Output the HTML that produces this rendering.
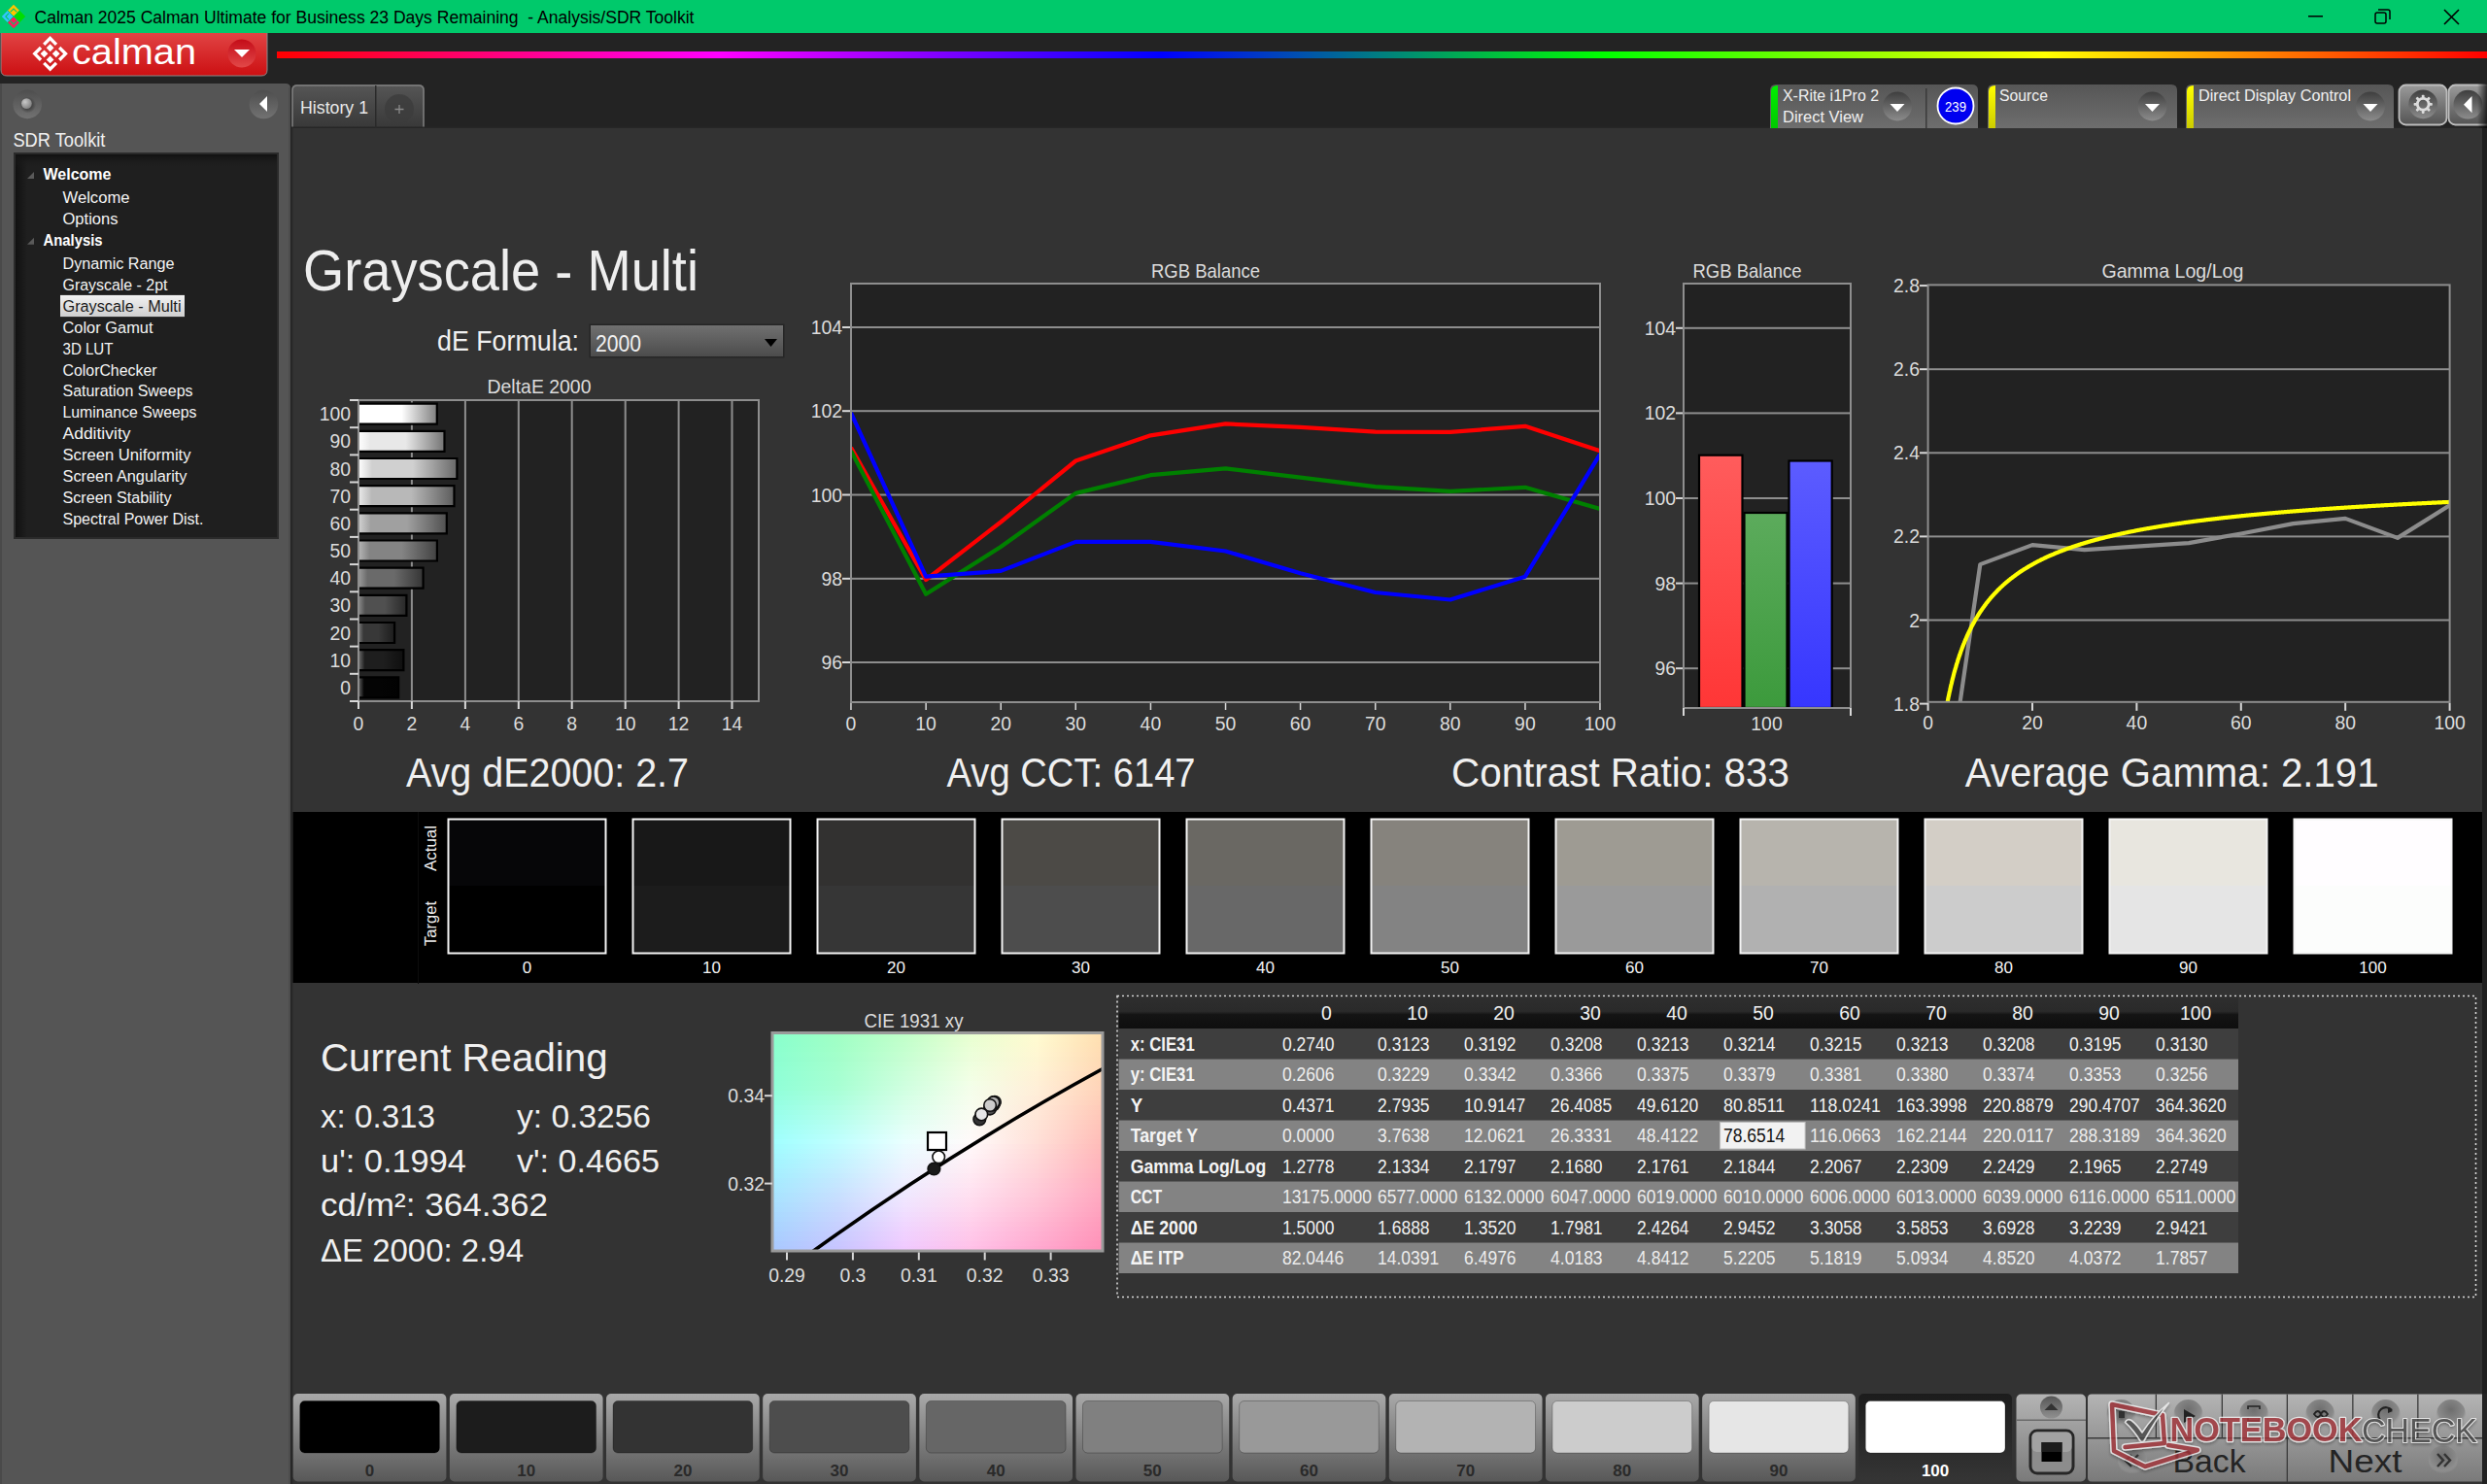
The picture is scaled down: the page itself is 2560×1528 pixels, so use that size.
<!DOCTYPE html>
<html><head><meta charset="utf-8"><title>Calman - Grayscale Multi</title>
<style>html,body{margin:0;padding:0;width:2560px;height:1528px;overflow:hidden;background:#232323;font-family:"Liberation Sans", sans-serif;}</style>
</head><body>
<svg width="2560" height="1528" viewBox="0 0 2560 1528" style="position:absolute;left:0;top:0;font-family:&quot;Liberation Sans&quot;, sans-serif"><defs>
<linearGradient id="rainbow" x1="0" x2="1" y1="0" y2="0">
 <stop offset="0" stop-color="#ff0000"/><stop offset="0.2" stop-color="#ff00ff"/>
 <stop offset="0.4" stop-color="#0000ff"/><stop offset="0.6" stop-color="#00ff00"/>
 <stop offset="0.8" stop-color="#ffff00"/><stop offset="1" stop-color="#ff0000"/>
</linearGradient>
<linearGradient id="calred" x1="0" x2="0" y1="0" y2="1">
 <stop offset="0" stop-color="#e14444"/><stop offset="1" stop-color="#cc0f12"/>
</linearGradient>
<linearGradient id="ddcirc" x1="0" x2="0" y1="0" y2="1">
 <stop offset="0" stop-color="#3e3e3e"/><stop offset="1" stop-color="#8c8c8c"/>
</linearGradient>
<linearGradient id="redcirc" x1="0" x2="0" y1="0" y2="1">
 <stop offset="0" stop-color="#c40c18"/><stop offset="1" stop-color="#e24848"/>
</linearGradient>
<linearGradient id="widget" x1="0" x2="0" y1="0" y2="1">
 <stop offset="0" stop-color="#565656"/><stop offset="1" stop-color="#6e6e6e"/>
</linearGradient>
<linearGradient id="tabg" x1="0" x2="0" y1="0" y2="1">
 <stop offset="0" stop-color="#565656"/><stop offset="1" stop-color="#383838"/>
</linearGradient>
<linearGradient id="btngear" x1="0" x2="0" y1="0" y2="1">
 <stop offset="0" stop-color="#9a9a9a"/><stop offset="1" stop-color="#545454"/>
</linearGradient>
<linearGradient id="patchbtn" x1="0" x2="0" y1="0" y2="1">
 <stop offset="0" stop-color="#a9a9a9"/><stop offset="1" stop-color="#585858"/>
</linearGradient>
<linearGradient id="navbtn" x1="0" x2="0" y1="0" y2="1">
 <stop offset="0" stop-color="#b4b4b4"/><stop offset="1" stop-color="#7a7a7a"/>
</linearGradient>
<linearGradient id="hdr" x1="0" x2="0" y1="0" y2="1">
 <stop offset="0" stop-color="#2e2e2e"/><stop offset="0.45" stop-color="#2a2a2a"/><stop offset="0.55" stop-color="#141414"/><stop offset="1" stop-color="#0e0e0e"/>
</linearGradient>
<linearGradient id="treeshade" x1="0" x2="1" y1="0" y2="0">
 <stop offset="0" stop-color="#111"/><stop offset="1" stop-color="#1f1f1f"/>
</linearGradient>
<linearGradient id="ddsel" x1="0" x2="0" y1="0" y2="1">
 <stop offset="0" stop-color="#4a4a4a"/><stop offset="1" stop-color="#6a6a6a"/>
</linearGradient>
<linearGradient id="sbc" x1="0" x2="0" y1="0" y2="1"><stop offset="0" stop-color="#4e4e4e"/><stop offset="1" stop-color="#727272"/></linearGradient><radialGradient id="sph" cx="0.35" cy="0.35" r="0.75"><stop offset="0" stop-color="#c8c8c8"/><stop offset="1" stop-color="#7a7a7a"/></radialGradient><radialGradient id="sphsh" cx="0.5" cy="0.5" r="0.5"><stop offset="0.55" stop-color="#3a3a3a" stop-opacity="0.7"/><stop offset="1" stop-color="#3a3a3a" stop-opacity="0"/></radialGradient><linearGradient id="treetop" x1="0" x2="0" y1="0" y2="1"><stop offset="0" stop-color="#111" stop-opacity="1"/><stop offset="1" stop-color="#1f1f1f" stop-opacity="0"/></linearGradient><linearGradient id="selg" x1="0" x2="0" y1="0" y2="1"><stop offset="0" stop-color="#f2f2f2"/><stop offset="1" stop-color="#cfcfcf"/></linearGradient><linearGradient id="stg" x1="0" x2="0" y1="0" y2="1"><stop offset="0" stop-color="#00f000"/><stop offset="1" stop-color="#00c800"/></linearGradient><linearGradient id="sty" x1="0" x2="0" y1="0" y2="1"><stop offset="0" stop-color="#ffff00"/><stop offset="1" stop-color="#cccc00"/></linearGradient><linearGradient id="rshade" x1="0" x2="1" y1="0" y2="0"><stop offset="0" stop-color="#000" stop-opacity="0"/><stop offset="1" stop-color="#000" stop-opacity="0.7"/></linearGradient><linearGradient id="ddbox" x1="0" x2="0" y1="0" y2="1"><stop offset="0" stop-color="#707070"/><stop offset="1" stop-color="#4c4c4c"/></linearGradient><linearGradient id="bar0" x1="0" x2="1" y1="0" y2="0"><stop offset="0" stop-color="rgb(97,97,97)"/><stop offset="0.14" stop-color="rgb(4,4,4)"/><stop offset="0.55" stop-color="rgb(4,4,4)"/><stop offset="1" stop-color="rgb(2,2,2)"/></linearGradient><linearGradient id="bar1" x1="0" x2="1" y1="0" y2="0"><stop offset="0" stop-color="rgb(111,111,111)"/><stop offset="0.14" stop-color="rgb(30,30,30)"/><stop offset="0.55" stop-color="rgb(30,30,30)"/><stop offset="1" stop-color="rgb(15,15,15)"/></linearGradient><linearGradient id="bar2" x1="0" x2="1" y1="0" y2="0"><stop offset="0" stop-color="rgb(125,125,125)"/><stop offset="0.14" stop-color="rgb(56,56,56)"/><stop offset="0.55" stop-color="rgb(56,56,56)"/><stop offset="1" stop-color="rgb(28,28,28)"/></linearGradient><linearGradient id="bar3" x1="0" x2="1" y1="0" y2="0"><stop offset="0" stop-color="rgb(139,139,139)"/><stop offset="0.14" stop-color="rgb(80,80,80)"/><stop offset="0.55" stop-color="rgb(80,80,80)"/><stop offset="1" stop-color="rgb(40,40,40)"/></linearGradient><linearGradient id="bar4" x1="0" x2="1" y1="0" y2="0"><stop offset="0" stop-color="rgb(156,156,156)"/><stop offset="0.14" stop-color="rgb(106,106,106)"/><stop offset="0.55" stop-color="rgb(106,106,106)"/><stop offset="1" stop-color="rgb(53,53,53)"/></linearGradient><linearGradient id="bar5" x1="0" x2="1" y1="0" y2="0"><stop offset="0" stop-color="rgb(182,182,182)"/><stop offset="0.14" stop-color="rgb(132,132,132)"/><stop offset="0.55" stop-color="rgb(132,132,132)"/><stop offset="1" stop-color="rgb(66,66,66)"/></linearGradient><linearGradient id="bar6" x1="0" x2="1" y1="0" y2="0"><stop offset="0" stop-color="rgb(210,210,210)"/><stop offset="0.14" stop-color="rgb(160,160,160)"/><stop offset="0.55" stop-color="rgb(160,160,160)"/><stop offset="1" stop-color="rgb(80,80,80)"/></linearGradient><linearGradient id="bar7" x1="0" x2="1" y1="0" y2="0"><stop offset="0" stop-color="rgb(234,234,234)"/><stop offset="0.14" stop-color="rgb(184,184,184)"/><stop offset="0.55" stop-color="rgb(184,184,184)"/><stop offset="1" stop-color="rgb(92,92,92)"/></linearGradient><linearGradient id="bar8" x1="0" x2="1" y1="0" y2="0"><stop offset="0" stop-color="rgb(255,255,255)"/><stop offset="0.14" stop-color="rgb(208,208,208)"/><stop offset="0.55" stop-color="rgb(208,208,208)"/><stop offset="1" stop-color="rgb(104,104,104)"/></linearGradient><linearGradient id="bar9" x1="0" x2="1" y1="0" y2="0"><stop offset="0" stop-color="rgb(255,255,255)"/><stop offset="0.14" stop-color="rgb(232,232,232)"/><stop offset="0.55" stop-color="rgb(232,232,232)"/><stop offset="1" stop-color="rgb(116,116,116)"/></linearGradient><linearGradient id="bar10" x1="0" x2="1" y1="0" y2="0"><stop offset="0" stop-color="rgb(255,255,255)"/><stop offset="0.14" stop-color="rgb(255,255,255)"/><stop offset="0.55" stop-color="rgb(255,255,255)"/><stop offset="1" stop-color="rgb(127,127,127)"/></linearGradient><linearGradient id="gr" x1="0" x2="0" y1="0" y2="1"><stop offset="0" stop-color="#ff5c5c"/><stop offset="1" stop-color="#ff3636"/></linearGradient><linearGradient id="gg" x1="0" x2="0" y1="0" y2="1"><stop offset="0" stop-color="#5cab5c"/><stop offset="1" stop-color="#3c9a3c"/></linearGradient><linearGradient id="gb" x1="0" x2="0" y1="0" y2="1"><stop offset="0" stop-color="#5c5cff"/><stop offset="1" stop-color="#3636ff"/></linearGradient><linearGradient id="cieH" x1="0" x2="1" y1="0" y2="0"><stop offset="0" stop-color="#9fffe0"/><stop offset="0.5" stop-color="#f4fff4"/><stop offset="1" stop-color="#ffd8b0"/></linearGradient>
<linearGradient id="cieB" x1="0" x2="1" y1="0" y2="0"><stop offset="0" stop-color="#a8ccff"/><stop offset="0.5" stop-color="#ffd2f8"/><stop offset="1" stop-color="#ff8fb8"/></linearGradient>
<linearGradient id="cieV" x1="0" x2="0" y1="0" y2="1"><stop offset="0" stop-color="#000" stop-opacity="0"/><stop offset="1" stop-color="#000" stop-opacity="1"/></linearGradient>
<mask id="cieMask"><rect x="795" y="1063.5" width="340" height="224.5" fill="url(#cieV)"/></mask>
<radialGradient id="cieW" cx="0.48" cy="0.52" r="0.45"><stop offset="0" stop-color="#ffffff" stop-opacity="1"/><stop offset="1" stop-color="#ffffff" stop-opacity="0"/></radialGradient>
<radialGradient id="cieC" cx="0.0" cy="0.5" r="0.45"><stop offset="0" stop-color="#a8ffff" stop-opacity="1"/><stop offset="1" stop-color="#a8ffff" stop-opacity="0"/></radialGradient>
<radialGradient id="cieY" cx="0.72" cy="0.1" r="0.35"><stop offset="0" stop-color="#ffffd0" stop-opacity="1"/><stop offset="1" stop-color="#ffffd0" stop-opacity="0"/></radialGradient>
<linearGradient id="cr0" x1="0" x2="1" y1="0" y2="0"><stop offset="0.00" stop-color="rgb(136,255,204)"/><stop offset="0.20" stop-color="rgb(160,255,196)"/><stop offset="0.40" stop-color="rgb(192,255,201)"/><stop offset="0.60" stop-color="rgb(232,255,209)"/><stop offset="0.80" stop-color="rgb(255,251,208)"/><stop offset="1.00" stop-color="rgb(255,223,176)"/></linearGradient><linearGradient id="cr1" x1="0" x2="1" y1="0" y2="0"><stop offset="0.00" stop-color="rgb(137,255,205)"/><stop offset="0.20" stop-color="rgb(161,255,198)"/><stop offset="0.40" stop-color="rgb(194,255,203)"/><stop offset="0.60" stop-color="rgb(233,255,211)"/><stop offset="0.80" stop-color="rgb(255,250,209)"/><stop offset="1.00" stop-color="rgb(255,222,177)"/></linearGradient><linearGradient id="cr2" x1="0" x2="1" y1="0" y2="0"><stop offset="0.00" stop-color="rgb(137,255,206)"/><stop offset="0.20" stop-color="rgb(161,255,199)"/><stop offset="0.40" stop-color="rgb(195,255,205)"/><stop offset="0.60" stop-color="rgb(234,255,213)"/><stop offset="0.80" stop-color="rgb(255,249,209)"/><stop offset="1.00" stop-color="rgb(255,221,177)"/></linearGradient><linearGradient id="cr3" x1="0" x2="1" y1="0" y2="0"><stop offset="0.00" stop-color="rgb(138,255,207)"/><stop offset="0.20" stop-color="rgb(162,255,200)"/><stop offset="0.40" stop-color="rgb(196,255,207)"/><stop offset="0.60" stop-color="rgb(235,255,216)"/><stop offset="0.80" stop-color="rgb(255,248,210)"/><stop offset="1.00" stop-color="rgb(255,220,178)"/></linearGradient><linearGradient id="cr4" x1="0" x2="1" y1="0" y2="0"><stop offset="0.00" stop-color="rgb(139,255,208)"/><stop offset="0.20" stop-color="rgb(163,255,202)"/><stop offset="0.40" stop-color="rgb(198,255,209)"/><stop offset="0.60" stop-color="rgb(236,255,218)"/><stop offset="0.80" stop-color="rgb(255,247,211)"/><stop offset="1.00" stop-color="rgb(255,219,179)"/></linearGradient><linearGradient id="cr5" x1="0" x2="1" y1="0" y2="0"><stop offset="0.00" stop-color="rgb(139,254,209)"/><stop offset="0.20" stop-color="rgb(163,254,203)"/><stop offset="0.40" stop-color="rgb(199,254,211)"/><stop offset="0.60" stop-color="rgb(237,254,220)"/><stop offset="0.80" stop-color="rgb(254,246,211)"/><stop offset="1.00" stop-color="rgb(254,218,179)"/></linearGradient><linearGradient id="cr6" x1="0" x2="1" y1="0" y2="0"><stop offset="0.00" stop-color="rgb(140,255,210)"/><stop offset="0.20" stop-color="rgb(164,255,205)"/><stop offset="0.40" stop-color="rgb(201,255,213)"/><stop offset="0.60" stop-color="rgb(238,255,223)"/><stop offset="0.80" stop-color="rgb(255,245,212)"/><stop offset="1.00" stop-color="rgb(255,217,180)"/></linearGradient><linearGradient id="cr7" x1="0" x2="1" y1="0" y2="0"><stop offset="0.00" stop-color="rgb(141,255,212)"/><stop offset="0.20" stop-color="rgb(165,255,206)"/><stop offset="0.40" stop-color="rgb(202,255,216)"/><stop offset="0.60" stop-color="rgb(240,255,225)"/><stop offset="0.80" stop-color="rgb(255,244,213)"/><stop offset="1.00" stop-color="rgb(255,216,181)"/></linearGradient><linearGradient id="cr8" x1="0" x2="1" y1="0" y2="0"><stop offset="0.00" stop-color="rgb(142,255,213)"/><stop offset="0.20" stop-color="rgb(166,255,208)"/><stop offset="0.40" stop-color="rgb(204,255,218)"/><stop offset="0.60" stop-color="rgb(241,255,227)"/><stop offset="0.80" stop-color="rgb(255,242,214)"/><stop offset="1.00" stop-color="rgb(255,214,182)"/></linearGradient><linearGradient id="cr9" x1="0" x2="1" y1="0" y2="0"><stop offset="0.00" stop-color="rgb(142,255,214)"/><stop offset="0.20" stop-color="rgb(166,255,209)"/><stop offset="0.40" stop-color="rgb(205,255,220)"/><stop offset="0.60" stop-color="rgb(242,255,229)"/><stop offset="0.80" stop-color="rgb(255,241,214)"/><stop offset="1.00" stop-color="rgb(255,213,182)"/></linearGradient><linearGradient id="cr10" x1="0" x2="1" y1="0" y2="0"><stop offset="0.00" stop-color="rgb(143,255,215)"/><stop offset="0.20" stop-color="rgb(167,255,210)"/><stop offset="0.40" stop-color="rgb(206,255,222)"/><stop offset="0.60" stop-color="rgb(243,255,232)"/><stop offset="0.80" stop-color="rgb(255,240,215)"/><stop offset="1.00" stop-color="rgb(255,212,183)"/></linearGradient><linearGradient id="cr11" x1="0" x2="1" y1="0" y2="0"><stop offset="0.00" stop-color="rgb(144,255,216)"/><stop offset="0.20" stop-color="rgb(168,255,212)"/><stop offset="0.40" stop-color="rgb(208,255,224)"/><stop offset="0.60" stop-color="rgb(244,254,234)"/><stop offset="0.80" stop-color="rgb(255,239,216)"/><stop offset="1.00" stop-color="rgb(255,211,184)"/></linearGradient><linearGradient id="cr12" x1="0" x2="1" y1="0" y2="0"><stop offset="0.00" stop-color="rgb(145,255,220)"/><stop offset="0.20" stop-color="rgb(170,255,216)"/><stop offset="0.40" stop-color="rgb(210,255,227)"/><stop offset="0.60" stop-color="rgb(245,254,235)"/><stop offset="0.80" stop-color="rgb(255,238,216)"/><stop offset="1.00" stop-color="rgb(255,209,184)"/></linearGradient><linearGradient id="cr13" x1="0" x2="1" y1="0" y2="0"><stop offset="0.00" stop-color="rgb(147,255,223)"/><stop offset="0.20" stop-color="rgb(172,255,220)"/><stop offset="0.40" stop-color="rgb(213,255,230)"/><stop offset="0.60" stop-color="rgb(246,254,237)"/><stop offset="0.80" stop-color="rgb(255,236,216)"/><stop offset="1.00" stop-color="rgb(255,207,184)"/></linearGradient><linearGradient id="cr14" x1="0" x2="1" y1="0" y2="0"><stop offset="0.00" stop-color="rgb(148,255,227)"/><stop offset="0.20" stop-color="rgb(174,255,224)"/><stop offset="0.40" stop-color="rgb(215,255,232)"/><stop offset="0.60" stop-color="rgb(247,253,238)"/><stop offset="0.80" stop-color="rgb(255,235,216)"/><stop offset="1.00" stop-color="rgb(255,205,184)"/></linearGradient><linearGradient id="cr15" x1="0" x2="1" y1="0" y2="0"><stop offset="0.00" stop-color="rgb(150,255,230)"/><stop offset="0.20" stop-color="rgb(177,255,228)"/><stop offset="0.40" stop-color="rgb(217,255,235)"/><stop offset="0.60" stop-color="rgb(248,253,240)"/><stop offset="0.80" stop-color="rgb(255,233,216)"/><stop offset="1.00" stop-color="rgb(255,202,184)"/></linearGradient><linearGradient id="cr16" x1="0" x2="1" y1="0" y2="0"><stop offset="0.00" stop-color="rgb(151,255,234)"/><stop offset="0.20" stop-color="rgb(179,255,232)"/><stop offset="0.40" stop-color="rgb(220,255,238)"/><stop offset="0.60" stop-color="rgb(249,252,241)"/><stop offset="0.80" stop-color="rgb(255,232,216)"/><stop offset="1.00" stop-color="rgb(255,200,184)"/></linearGradient><linearGradient id="cr17" x1="0" x2="1" y1="0" y2="0"><stop offset="0.00" stop-color="rgb(152,255,237)"/><stop offset="0.20" stop-color="rgb(181,255,235)"/><stop offset="0.40" stop-color="rgb(222,255,241)"/><stop offset="0.60" stop-color="rgb(250,252,242)"/><stop offset="0.80" stop-color="rgb(255,231,216)"/><stop offset="1.00" stop-color="rgb(255,198,184)"/></linearGradient><linearGradient id="cr18" x1="0" x2="1" y1="0" y2="0"><stop offset="0.00" stop-color="rgb(154,255,241)"/><stop offset="0.20" stop-color="rgb(183,255,239)"/><stop offset="0.40" stop-color="rgb(224,255,243)"/><stop offset="0.60" stop-color="rgb(251,251,244)"/><stop offset="0.80" stop-color="rgb(255,229,216)"/><stop offset="1.00" stop-color="rgb(255,196,184)"/></linearGradient><linearGradient id="cr19" x1="0" x2="1" y1="0" y2="0"><stop offset="0.00" stop-color="rgb(155,255,244)"/><stop offset="0.20" stop-color="rgb(185,255,243)"/><stop offset="0.40" stop-color="rgb(227,255,246)"/><stop offset="0.60" stop-color="rgb(252,251,245)"/><stop offset="0.80" stop-color="rgb(255,228,216)"/><stop offset="1.00" stop-color="rgb(255,194,184)"/></linearGradient><linearGradient id="cr20" x1="0" x2="1" y1="0" y2="0"><stop offset="0.00" stop-color="rgb(157,255,248)"/><stop offset="0.20" stop-color="rgb(187,255,247)"/><stop offset="0.40" stop-color="rgb(229,255,249)"/><stop offset="0.60" stop-color="rgb(253,250,247)"/><stop offset="0.80" stop-color="rgb(255,226,216)"/><stop offset="1.00" stop-color="rgb(255,192,184)"/></linearGradient><linearGradient id="cr21" x1="0" x2="1" y1="0" y2="0"><stop offset="0.00" stop-color="rgb(158,255,251)"/><stop offset="0.20" stop-color="rgb(189,255,251)"/><stop offset="0.40" stop-color="rgb(231,255,252)"/><stop offset="0.60" stop-color="rgb(254,250,248)"/><stop offset="0.80" stop-color="rgb(255,225,216)"/><stop offset="1.00" stop-color="rgb(255,190,184)"/></linearGradient><linearGradient id="cr22" x1="0" x2="1" y1="0" y2="0"><stop offset="0.00" stop-color="rgb(160,255,255)"/><stop offset="0.20" stop-color="rgb(192,255,255)"/><stop offset="0.40" stop-color="rgb(234,255,255)"/><stop offset="0.60" stop-color="rgb(255,250,250)"/><stop offset="0.80" stop-color="rgb(255,224,216)"/><stop offset="1.00" stop-color="rgb(255,188,184)"/></linearGradient><linearGradient id="cr23" x1="0" x2="1" y1="0" y2="0"><stop offset="0.00" stop-color="rgb(160,252,255)"/><stop offset="0.20" stop-color="rgb(192,252,255)"/><stop offset="0.40" stop-color="rgb(234,252,255)"/><stop offset="0.60" stop-color="rgb(255,247,249)"/><stop offset="0.80" stop-color="rgb(255,221,216)"/><stop offset="1.00" stop-color="rgb(255,186,184)"/></linearGradient><linearGradient id="cr24" x1="0" x2="1" y1="0" y2="0"><stop offset="0.00" stop-color="rgb(161,250,255)"/><stop offset="0.20" stop-color="rgb(193,249,255)"/><stop offset="0.40" stop-color="rgb(235,250,255)"/><stop offset="0.60" stop-color="rgb(255,245,248)"/><stop offset="0.80" stop-color="rgb(255,219,216)"/><stop offset="1.00" stop-color="rgb(255,184,185)"/></linearGradient><linearGradient id="cr25" x1="0" x2="1" y1="0" y2="0"><stop offset="0.00" stop-color="rgb(162,247,255)"/><stop offset="0.20" stop-color="rgb(194,246,255)"/><stop offset="0.40" stop-color="rgb(235,248,255)"/><stop offset="0.60" stop-color="rgb(255,243,247)"/><stop offset="0.80" stop-color="rgb(255,217,216)"/><stop offset="1.00" stop-color="rgb(255,182,186)"/></linearGradient><linearGradient id="cr26" x1="0" x2="1" y1="0" y2="0"><stop offset="0.00" stop-color="rgb(162,245,255)"/><stop offset="0.20" stop-color="rgb(194,243,255)"/><stop offset="0.40" stop-color="rgb(236,246,255)"/><stop offset="0.60" stop-color="rgb(255,240,246)"/><stop offset="0.80" stop-color="rgb(255,215,216)"/><stop offset="1.00" stop-color="rgb(255,180,186)"/></linearGradient><linearGradient id="cr27" x1="0" x2="1" y1="0" y2="0"><stop offset="0.00" stop-color="rgb(163,243,255)"/><stop offset="0.20" stop-color="rgb(195,241,255)"/><stop offset="0.40" stop-color="rgb(236,244,255)"/><stop offset="0.60" stop-color="rgb(255,238,245)"/><stop offset="0.80" stop-color="rgb(255,213,216)"/><stop offset="1.00" stop-color="rgb(255,179,187)"/></linearGradient><linearGradient id="cr28" x1="0" x2="1" y1="0" y2="0"><stop offset="0.00" stop-color="rgb(164,240,255)"/><stop offset="0.20" stop-color="rgb(196,238,255)"/><stop offset="0.40" stop-color="rgb(237,242,255)"/><stop offset="0.60" stop-color="rgb(255,236,244)"/><stop offset="0.80" stop-color="rgb(255,211,216)"/><stop offset="1.00" stop-color="rgb(255,177,188)"/></linearGradient><linearGradient id="cr29" x1="0" x2="1" y1="0" y2="0"><stop offset="0.00" stop-color="rgb(164,238,255)"/><stop offset="0.20" stop-color="rgb(196,235,255)"/><stop offset="0.40" stop-color="rgb(237,240,255)"/><stop offset="0.60" stop-color="rgb(255,233,243)"/><stop offset="0.80" stop-color="rgb(255,209,216)"/><stop offset="1.00" stop-color="rgb(255,175,188)"/></linearGradient><linearGradient id="cr30" x1="0" x2="1" y1="0" y2="0"><stop offset="0.00" stop-color="rgb(165,235,255)"/><stop offset="0.20" stop-color="rgb(197,232,255)"/><stop offset="0.40" stop-color="rgb(238,238,255)"/><stop offset="0.60" stop-color="rgb(255,231,242)"/><stop offset="0.80" stop-color="rgb(255,206,216)"/><stop offset="1.00" stop-color="rgb(255,173,189)"/></linearGradient><linearGradient id="cr31" x1="0" x2="1" y1="0" y2="0"><stop offset="0.00" stop-color="rgb(166,233,255)"/><stop offset="0.20" stop-color="rgb(198,230,255)"/><stop offset="0.40" stop-color="rgb(238,236,255)"/><stop offset="0.60" stop-color="rgb(255,229,242)"/><stop offset="0.80" stop-color="rgb(255,204,216)"/><stop offset="1.00" stop-color="rgb(255,172,190)"/></linearGradient><linearGradient id="cr32" x1="0" x2="1" y1="0" y2="0"><stop offset="0.00" stop-color="rgb(167,231,255)"/><stop offset="0.20" stop-color="rgb(199,227,255)"/><stop offset="0.40" stop-color="rgb(239,234,255)"/><stop offset="0.60" stop-color="rgb(255,226,241)"/><stop offset="0.80" stop-color="rgb(255,202,216)"/><stop offset="1.00" stop-color="rgb(255,170,191)"/></linearGradient><linearGradient id="cr33" x1="0" x2="1" y1="0" y2="0"><stop offset="0.00" stop-color="rgb(167,228,255)"/><stop offset="0.20" stop-color="rgb(199,224,255)"/><stop offset="0.40" stop-color="rgb(239,232,255)"/><stop offset="0.60" stop-color="rgb(255,224,240)"/><stop offset="0.80" stop-color="rgb(255,200,216)"/><stop offset="1.00" stop-color="rgb(255,168,191)"/></linearGradient><linearGradient id="cr34" x1="0" x2="1" y1="0" y2="0"><stop offset="0.00" stop-color="rgb(168,226,255)"/><stop offset="0.20" stop-color="rgb(200,222,255)"/><stop offset="0.40" stop-color="rgb(240,229,255)"/><stop offset="0.60" stop-color="rgb(255,221,239)"/><stop offset="0.80" stop-color="rgb(255,197,215)"/><stop offset="1.00" stop-color="rgb(255,166,191)"/></linearGradient><linearGradient id="cr35" x1="0" x2="1" y1="0" y2="0"><stop offset="0.00" stop-color="rgb(168,223,255)"/><stop offset="0.20" stop-color="rgb(200,219,255)"/><stop offset="0.40" stop-color="rgb(240,227,255)"/><stop offset="0.60" stop-color="rgb(255,219,238)"/><stop offset="0.80" stop-color="rgb(255,195,214)"/><stop offset="1.00" stop-color="rgb(255,164,190)"/></linearGradient><linearGradient id="cr36" x1="0" x2="1" y1="0" y2="0"><stop offset="0.00" stop-color="rgb(168,221,255)"/><stop offset="0.20" stop-color="rgb(200,217,255)"/><stop offset="0.40" stop-color="rgb(240,224,255)"/><stop offset="0.60" stop-color="rgb(255,216,238)"/><stop offset="0.80" stop-color="rgb(255,192,214)"/><stop offset="1.00" stop-color="rgb(255,162,190)"/></linearGradient><linearGradient id="cr37" x1="0" x2="1" y1="0" y2="0"><stop offset="0.00" stop-color="rgb(168,218,255)"/><stop offset="0.20" stop-color="rgb(200,214,255)"/><stop offset="0.40" stop-color="rgb(240,221,255)"/><stop offset="0.60" stop-color="rgb(255,213,237)"/><stop offset="0.80" stop-color="rgb(255,189,213)"/><stop offset="1.00" stop-color="rgb(255,160,189)"/></linearGradient><linearGradient id="cr38" x1="0" x2="1" y1="0" y2="0"><stop offset="0.00" stop-color="rgb(168,216,255)"/><stop offset="0.20" stop-color="rgb(200,212,255)"/><stop offset="0.40" stop-color="rgb(240,218,255)"/><stop offset="0.60" stop-color="rgb(255,210,236)"/><stop offset="0.80" stop-color="rgb(255,186,212)"/><stop offset="1.00" stop-color="rgb(255,157,188)"/></linearGradient><linearGradient id="cr39" x1="0" x2="1" y1="0" y2="0"><stop offset="0.00" stop-color="rgb(168,213,255)"/><stop offset="0.20" stop-color="rgb(200,209,255)"/><stop offset="0.40" stop-color="rgb(240,215,255)"/><stop offset="0.60" stop-color="rgb(255,207,235)"/><stop offset="0.80" stop-color="rgb(255,183,211)"/><stop offset="1.00" stop-color="rgb(255,155,187)"/></linearGradient><linearGradient id="cr40" x1="0" x2="1" y1="0" y2="0"><stop offset="0.00" stop-color="rgb(168,211,255)"/><stop offset="0.20" stop-color="rgb(200,207,255)"/><stop offset="0.40" stop-color="rgb(240,212,255)"/><stop offset="0.60" stop-color="rgb(255,204,235)"/><stop offset="0.80" stop-color="rgb(255,180,211)"/><stop offset="1.00" stop-color="rgb(255,153,187)"/></linearGradient><linearGradient id="cr41" x1="0" x2="1" y1="0" y2="0"><stop offset="0.00" stop-color="rgb(168,208,255)"/><stop offset="0.20" stop-color="rgb(200,204,255)"/><stop offset="0.40" stop-color="rgb(240,209,255)"/><stop offset="0.60" stop-color="rgb(255,201,234)"/><stop offset="0.80" stop-color="rgb(255,177,210)"/><stop offset="1.00" stop-color="rgb(255,151,186)"/></linearGradient><linearGradient id="cr42" x1="0" x2="1" y1="0" y2="0"><stop offset="0.00" stop-color="rgb(168,206,255)"/><stop offset="0.20" stop-color="rgb(200,202,255)"/><stop offset="0.40" stop-color="rgb(240,207,255)"/><stop offset="0.60" stop-color="rgb(255,199,233)"/><stop offset="0.80" stop-color="rgb(255,175,209)"/><stop offset="1.00" stop-color="rgb(255,149,185)"/></linearGradient><linearGradient id="cr43" x1="0" x2="1" y1="0" y2="0"><stop offset="0.00" stop-color="rgb(168,203,255)"/><stop offset="0.20" stop-color="rgb(200,199,255)"/><stop offset="0.40" stop-color="rgb(240,204,255)"/><stop offset="0.60" stop-color="rgb(255,196,233)"/><stop offset="0.80" stop-color="rgb(255,172,209)"/><stop offset="1.00" stop-color="rgb(255,147,185)"/></linearGradient><linearGradient id="cr44" x1="0" x2="1" y1="0" y2="0"><stop offset="0.00" stop-color="rgb(168,201,255)"/><stop offset="0.20" stop-color="rgb(200,197,255)"/><stop offset="0.40" stop-color="rgb(240,201,255)"/><stop offset="0.60" stop-color="rgb(255,193,232)"/><stop offset="0.80" stop-color="rgb(255,169,208)"/><stop offset="1.00" stop-color="rgb(255,145,184)"/></linearGradient><linearGradient id="selbtn" x1="0" x2="0" y1="0" y2="1"><stop offset="0" stop-color="#1c1c1c"/><stop offset="1" stop-color="#353535"/></linearGradient><radialGradient id="ncirc" cx="0.5" cy="0.35" r="0.6"><stop offset="0" stop-color="#6e6e6e"/><stop offset="0.75" stop-color="#8a8a8a"/><stop offset="1" stop-color="#a4a4a4" stop-opacity="0"/></radialGradient><filter id="wsh" x="-10%" y="-10%" width="120%" height="130%"><feGaussianBlur in="SourceAlpha" stdDeviation="1.5"/><feOffset dx="0" dy="2"/><feComponentTransfer><feFuncA type="linear" slope="0.35"/></feComponentTransfer><feMerge><feMergeNode/><feMergeNode in="SourceGraphic"/></feMerge></filter></defs><rect x="0" y="0" width="2560" height="34" fill="#00c96b"/><path d="M14 4.8 L20.2 11 L14 17.2 L7.8 11 Z" fill="#ffc400"/><path d="M8 10.8 L14.2 17 L8 23.2 L1.7999999999999998 17 Z" fill="#33c4ff"/><path d="M20 10.8 L26.2 17 L20 23.2 L13.8 17 Z" fill="#00dd00"/><path d="M14 16.8 L20.2 23 L14 29.2 L7.8 23 Z" fill="#ff1a5a"/><path d="M10.6 12.4 L14 9.1 L17.4 12.4 M10.6 21.6 L14 24.9 L17.4 21.6 M9.1 13.6 L5.8 17 L9.1 20.4" fill="none" stroke="#00c96b" stroke-width="1.1"/><path d="M8 11 L20 23 M20 11 L8 23" fill="none" stroke="#00c96b" stroke-width="0.9"/><text x="35.5" y="24.2" font-size="18.3" fill="#000" text-anchor="start" font-weight="normal" textLength="679.0" lengthAdjust="spacingAndGlyphs" >Calman 2025 Calman Ultimate for Business 23 Days Remaining &#160;- Analysis/SDR Toolkit</text><rect x="2376" y="16" width="15" height="1.5" fill="#000"/><rect x="2445" y="13" width="11" height="11" fill="none" stroke="#000" stroke-width="1.5" rx="2"/><path d="M2448 10 H2458 Q2460 10 2460 12 V20" fill="none" stroke="#000" stroke-width="1.5"/><path d="M2516 10 L2531 25 M2531 10 L2516 25" stroke="#000" stroke-width="1.6"/><rect x="0" y="34" width="2560" height="98" fill="#232323"/><rect x="285" y="53" width="2275" height="7" fill="url(#rainbow)"/><path d="M1 34 H275 V72 Q275 78 269 78 H7 Q1 78 1 72 Z" fill="url(#calred)"/><path d="M1 34 V72 Q1 78 7 78 H269 Q275 78 275 72 V34" fill="none" stroke="#8a8a8a" stroke-width="1"/><g fill="none" stroke="#fff" stroke-width="3.3" stroke-linejoin="miter"><path d="M45.24 45.81 L51.60 39.45 L57.96 45.81"/><path d="M61.14 48.99 L67.50 55.35 L61.14 61.71"/><path d="M57.96 64.89 L51.60 71.25 L45.24 64.89"/><path d="M42.06 61.71 L35.70 55.35 L42.06 48.99"/></g><g fill="#fff"><path d="M51.60 45.35 L55.50 49.25 L51.60 53.15 L47.70 49.25 Z"/><path d="M57.70 51.45 L61.60 55.35 L57.70 59.25 L53.80 55.35 Z"/><path d="M51.60 57.55 L55.50 61.45 L51.60 65.35 L47.70 61.45 Z"/><path d="M45.50 51.45 L49.40 55.35 L45.50 59.25 L41.60 55.35 Z"/></g><text x="74.0" y="66.0" font-size="36" fill="#fff" text-anchor="start" font-weight="normal" textLength="128.0" lengthAdjust="spacingAndGlyphs" >calman</text><circle cx="249" cy="55" r="14.5" fill="url(#redcirc)"/><path d="M241 51 H257 L249 59 Z" fill="#fff"/><path d="M0 86 H294 Q299 86 299 91 V1528 H0 Z" fill="#555555"/><rect x="0" y="86" width="2" height="1442" fill="#4a4a4a"/><rect x="297" y="90" width="2" height="1438" fill="#4d4d4d"/><circle cx="28.2" cy="107.4" r="14.8" fill="url(#sbc)"/><circle cx="28.6" cy="108" r="8.5" fill="url(#sphsh)"/><circle cx="27.4" cy="106.6" r="5.4" fill="url(#sph)"/><circle cx="271.4" cy="107.5" r="14.8" fill="url(#sbc)"/><path d="M267 107 L275 99 V115 Z" fill="#fff"/><text x="13.4" y="151.3" font-size="19.5" fill="#f0f0f0" text-anchor="start" font-weight="normal" textLength="95.0" lengthAdjust="spacingAndGlyphs" >SDR Toolkit</text><rect x="14" y="157" width="273" height="398" fill="#2b2b2b"/><rect x="16" y="159" width="269" height="394" fill="#1f1f1f"/><rect x="16" y="159" width="12" height="394" fill="url(#treeshade)"/><rect x="16" y="159" width="269" height="14" fill="url(#treetop)"/><path d="M28 183.9 L35 176.9 V183.9 Z" fill="#5a5a5a"/><text x="44.5" y="184.9" font-size="16.8" fill="#ffffff" text-anchor="start" font-weight="bold" textLength="70.0" lengthAdjust="spacingAndGlyphs" >Welcome</text><text x="64.5" y="208.9" font-size="16.8" fill="#f4f4f4" text-anchor="start" font-weight="normal" textLength="69.0" lengthAdjust="spacingAndGlyphs" >Welcome</text><text x="64.5" y="230.8" font-size="16.8" fill="#f4f4f4" text-anchor="start" font-weight="normal" textLength="57.0" lengthAdjust="spacingAndGlyphs" >Options</text><path d="M28 251.7 L35 244.7 V251.7 Z" fill="#5a5a5a"/><text x="44.5" y="252.7" font-size="16.8" fill="#ffffff" text-anchor="start" font-weight="bold" textLength="61.0" lengthAdjust="spacingAndGlyphs" >Analysis</text><text x="64.5" y="276.8" font-size="16.8" fill="#f4f4f4" text-anchor="start" font-weight="normal" textLength="115.0" lengthAdjust="spacingAndGlyphs" >Dynamic Range</text><text x="64.5" y="298.7" font-size="16.8" fill="#f4f4f4" text-anchor="start" font-weight="normal" textLength="108.0" lengthAdjust="spacingAndGlyphs" >Grayscale - 2pt</text><rect x="62" y="303.9" width="128" height="22.2" fill="url(#selg)"/><text x="64.5" y="320.7" font-size="16.8" fill="#1a1a1a" text-anchor="start" font-weight="normal" textLength="122.0" lengthAdjust="spacingAndGlyphs" >Grayscale - Multi</text><text x="64.5" y="342.6" font-size="16.8" fill="#f4f4f4" text-anchor="start" font-weight="normal" textLength="93.0" lengthAdjust="spacingAndGlyphs" >Color Gamut</text><text x="64.5" y="364.5" font-size="16.8" fill="#f4f4f4" text-anchor="start" font-weight="normal" textLength="52.0" lengthAdjust="spacingAndGlyphs" >3D LUT</text><text x="64.5" y="386.5" font-size="16.8" fill="#f4f4f4" text-anchor="start" font-weight="normal" textLength="97.0" lengthAdjust="spacingAndGlyphs" >ColorChecker</text><text x="64.5" y="408.4" font-size="16.8" fill="#f4f4f4" text-anchor="start" font-weight="normal" textLength="134.0" lengthAdjust="spacingAndGlyphs" >Saturation Sweeps</text><text x="64.5" y="430.3" font-size="16.8" fill="#f4f4f4" text-anchor="start" font-weight="normal" textLength="138.0" lengthAdjust="spacingAndGlyphs" >Luminance Sweeps</text><text x="64.5" y="452.2" font-size="16.8" fill="#f4f4f4" text-anchor="start" font-weight="normal" textLength="70.0" lengthAdjust="spacingAndGlyphs" >Additivity</text><text x="64.5" y="474.2" font-size="16.8" fill="#f4f4f4" text-anchor="start" font-weight="normal" textLength="132.0" lengthAdjust="spacingAndGlyphs" >Screen Uniformity</text><text x="64.5" y="496.1" font-size="16.8" fill="#f4f4f4" text-anchor="start" font-weight="normal" textLength="128.0" lengthAdjust="spacingAndGlyphs" >Screen Angularity</text><text x="64.5" y="518.0" font-size="16.8" fill="#f4f4f4" text-anchor="start" font-weight="normal" textLength="112.0" lengthAdjust="spacingAndGlyphs" >Screen Stability</text><text x="64.5" y="540.0" font-size="16.8" fill="#f4f4f4" text-anchor="start" font-weight="normal" textLength="145.0" lengthAdjust="spacingAndGlyphs" >Spectral Power Dist.</text><path d="M300 132 V93 Q300 87 306 87 H431 Q437 87 437 93 V132 Z" fill="url(#tabg)"/><path d="M301 132 V93 Q301 88 306 88 H431 Q436 88 436 93 V132" fill="none" stroke="#7d7d7d" stroke-width="1.5"/><rect x="300" y="130.5" width="2255" height="2" fill="#262626"/><rect x="386" y="88" width="1.5" height="44" fill="#2a2a2a"/><circle cx="411" cy="112" r="15" fill="#3c3c3c" opacity="0.8"/><path d="M406.5 112.5 H415.5 M411 108 V117" stroke="#8a8a8a" stroke-width="1.3"/><text x="309.0" y="116.8" font-size="18" fill="#e8e8e8" text-anchor="start" font-weight="normal" textLength="70.0" lengthAdjust="spacingAndGlyphs" >History 1</text><path d="M1822 132 V93 Q1822 87 1828 87 H2030 Q2036 87 2036 93 V132 Z" fill="url(#widget)"/><path d="M1823 132 V94 Q1823 88 1830 88 V132 Z" fill="url(#stg)"/><text x="1835.0" y="104.0" font-size="16" fill="#f0f0f0" text-anchor="start" font-weight="normal" textLength="99.0" lengthAdjust="spacingAndGlyphs" >X-Rite i1Pro 2</text><text x="1835.0" y="125.7" font-size="16" fill="#f0f0f0" text-anchor="start" font-weight="normal" textLength="83.0" lengthAdjust="spacingAndGlyphs" >Direct View</text><circle cx="1953" cy="109.5" r="15" fill="url(#ddcirc)"/><path d="M1945.5 107 H1960.5 L1953 115 Z" fill="#fff"/><rect x="1982" y="91" width="1.5" height="41" fill="#3a3a3a"/><circle cx="2013" cy="109" r="18.5" fill="#0000f0" stroke="#fff" stroke-width="1.8"/><text x="2013.0" y="114.5" font-size="15" fill="#fff" text-anchor="middle" font-weight="normal" textLength="22.0" lengthAdjust="spacingAndGlyphs" >239</text><path d="M2046 132 V93 Q2046 87 2052 87 H2235 Q2241 87 2241 93 V132 Z" fill="url(#widget)"/><path d="M2047 132 V94 Q2047 88 2054 88 V132 Z" fill="url(#sty)"/><text x="2058.0" y="104.0" font-size="16" fill="#f0f0f0" text-anchor="start" font-weight="normal" textLength="50.0" lengthAdjust="spacingAndGlyphs" >Source</text><circle cx="2215.5" cy="109.5" r="15" fill="url(#ddcirc)"/><path d="M2208.0 107 H2223.0 L2215.5 115 Z" fill="#fff"/><path d="M2250 132 V93 Q2250 87 2256 87 H2458 Q2464 87 2464 93 V132 Z" fill="url(#widget)"/><path d="M2251 132 V94 Q2251 88 2258 88 V132 Z" fill="url(#sty)"/><text x="2263.0" y="103.8" font-size="16" fill="#f0f0f0" text-anchor="start" font-weight="normal" textLength="157.0" lengthAdjust="spacingAndGlyphs" >Direct Display Control</text><circle cx="2440" cy="109.5" r="15" fill="url(#ddcirc)"/><path d="M2432.5 107 H2447.5 L2440 115 Z" fill="#fff"/><rect x="2469.5" y="87.5" width="49" height="41" rx="7" fill="url(#btngear)" stroke="#bdbdbd" stroke-width="1.8"/><circle cx="2494.2" cy="107.3" r="14.9" fill="url(#ddcirc)"/><rect x="-1.4" y="-9.6" width="2.8" height="4" rx="0.8" transform="translate(2494.2 107.3) rotate(0)" fill="#dcdcdc"/><rect x="-1.4" y="-9.6" width="2.8" height="4" rx="0.8" transform="translate(2494.2 107.3) rotate(45)" fill="#dcdcdc"/><rect x="-1.4" y="-9.6" width="2.8" height="4" rx="0.8" transform="translate(2494.2 107.3) rotate(90)" fill="#dcdcdc"/><rect x="-1.4" y="-9.6" width="2.8" height="4" rx="0.8" transform="translate(2494.2 107.3) rotate(135)" fill="#dcdcdc"/><rect x="-1.4" y="-9.6" width="2.8" height="4" rx="0.8" transform="translate(2494.2 107.3) rotate(180)" fill="#dcdcdc"/><rect x="-1.4" y="-9.6" width="2.8" height="4" rx="0.8" transform="translate(2494.2 107.3) rotate(225)" fill="#dcdcdc"/><rect x="-1.4" y="-9.6" width="2.8" height="4" rx="0.8" transform="translate(2494.2 107.3) rotate(270)" fill="#dcdcdc"/><rect x="-1.4" y="-9.6" width="2.8" height="4" rx="0.8" transform="translate(2494.2 107.3) rotate(315)" fill="#dcdcdc"/><circle cx="2494.2" cy="107.3" r="5.9" fill="none" stroke="#dcdcdc" stroke-width="2.8"/><rect x="2520.5" y="87.5" width="50" height="41" rx="7" fill="url(#btngear)" stroke="#bdbdbd" stroke-width="1.8"/><circle cx="2540.4" cy="107.7" r="14.9" fill="url(#ddcirc)"/><path d="M2536 107.7 L2544.5 99 V116.2 Z" fill="#fff"/><rect x="2550" y="86" width="10" height="46" fill="url(#rshade)"/><rect x="300" y="132" width="2255" height="1396" fill="#333333"/><rect x="300" y="132" width="1.5" height="1396" fill="#2a2a2a"/><rect x="2555" y="132" width="5" height="1396" fill="#1e1e1e"/><text x="312.0" y="299.0" font-size="59.6" fill="#eeeeee" text-anchor="start" font-weight="normal" textLength="407.0" lengthAdjust="spacingAndGlyphs" >Grayscale - Multi</text><text x="450.0" y="360.5" font-size="29" fill="#f0f0f0" text-anchor="start" font-weight="normal" textLength="146.0" lengthAdjust="spacingAndGlyphs" >dE Formula:</text><rect x="606.5" y="333.5" width="201" height="35" fill="#262626"/><rect x="608" y="335" width="198" height="32" fill="url(#ddbox)"/><text x="613.0" y="362.0" font-size="23" fill="#f0f0f0" text-anchor="start" font-weight="normal" textLength="47.0" lengthAdjust="spacingAndGlyphs" >2000</text><path d="M787 349 H800 L793.5 357 Z" fill="#000"/><rect x="369" y="412" width="412" height="310" fill="#222222"/><rect x="422.9" y="412" width="2" height="310" fill="#8e8e8e"/><rect x="477.9" y="412" width="2" height="310" fill="#8e8e8e"/><rect x="532.8" y="412" width="2" height="310" fill="#8e8e8e"/><rect x="587.7" y="412" width="2" height="310" fill="#8e8e8e"/><rect x="642.7" y="412" width="2" height="310" fill="#8e8e8e"/><rect x="697.6" y="412" width="2" height="310" fill="#8e8e8e"/><rect x="752.5" y="412" width="2" height="310" fill="#8e8e8e"/><text x="555.0" y="405.0" font-size="20.8" fill="#dcdcdc" text-anchor="middle" font-weight="normal" textLength="107.0" lengthAdjust="spacingAndGlyphs" >DeltaE 2000</text><rect x="369" y="697.4" width="41.2" height="21" fill="url(#bar0)"/><path d="M369 697.4 H410.2 V718.4 H369" fill="none" stroke="#000" stroke-width="2.2"/><text x="361.0" y="714.9" font-size="19.4" fill="#dcdcdc" text-anchor="end" font-weight="normal" >0</text><rect x="369" y="669.2" width="46.4" height="21" fill="url(#bar1)"/><path d="M369 669.2 H415.4 V690.2 H369" fill="none" stroke="#000" stroke-width="2.2"/><text x="361.0" y="686.7" font-size="19.4" fill="#dcdcdc" text-anchor="end" font-weight="normal" >10</text><rect x="369" y="641.0" width="37.1" height="21" fill="url(#bar2)"/><path d="M369 641.0 H406.1 V662.0 H369" fill="none" stroke="#000" stroke-width="2.2"/><text x="361.0" y="658.5" font-size="19.4" fill="#dcdcdc" text-anchor="end" font-weight="normal" >20</text><rect x="369" y="612.9" width="49.4" height="21" fill="url(#bar3)"/><path d="M369 612.9 H418.4 V633.9 H369" fill="none" stroke="#000" stroke-width="2.2"/><text x="361.0" y="630.4" font-size="19.4" fill="#dcdcdc" text-anchor="end" font-weight="normal" >30</text><rect x="369" y="584.7" width="66.6" height="21" fill="url(#bar4)"/><path d="M369 584.7 H435.6 V605.7 H369" fill="none" stroke="#000" stroke-width="2.2"/><text x="361.0" y="602.2" font-size="19.4" fill="#dcdcdc" text-anchor="end" font-weight="normal" >40</text><rect x="369" y="556.5" width="80.9" height="21" fill="url(#bar5)"/><path d="M369 556.5 H449.9 V577.5 H369" fill="none" stroke="#000" stroke-width="2.2"/><text x="361.0" y="574.0" font-size="19.4" fill="#dcdcdc" text-anchor="end" font-weight="normal" >50</text><rect x="369" y="528.3" width="90.8" height="21" fill="url(#bar6)"/><path d="M369 528.3 H459.8 V549.3 H369" fill="none" stroke="#000" stroke-width="2.2"/><text x="361.0" y="545.8" font-size="19.4" fill="#dcdcdc" text-anchor="end" font-weight="normal" >60</text><rect x="369" y="500.1" width="98.5" height="21" fill="url(#bar7)"/><path d="M369 500.1 H467.5 V521.1 H369" fill="none" stroke="#000" stroke-width="2.2"/><text x="361.0" y="517.6" font-size="19.4" fill="#dcdcdc" text-anchor="end" font-weight="normal" >70</text><rect x="369" y="472.0" width="101.4" height="21" fill="url(#bar8)"/><path d="M369 472.0 H470.4 V493.0 H369" fill="none" stroke="#000" stroke-width="2.2"/><text x="361.0" y="489.5" font-size="19.4" fill="#dcdcdc" text-anchor="end" font-weight="normal" >80</text><rect x="369" y="443.8" width="88.5" height="21" fill="url(#bar9)"/><path d="M369 443.8 H457.5 V464.8 H369" fill="none" stroke="#000" stroke-width="2.2"/><text x="361.0" y="461.3" font-size="19.4" fill="#dcdcdc" text-anchor="end" font-weight="normal" >90</text><rect x="369" y="415.6" width="80.8" height="21" fill="url(#bar10)"/><path d="M369 415.6 H449.8 V436.6 H369" fill="none" stroke="#000" stroke-width="2.2"/><text x="361.0" y="433.1" font-size="19.4" fill="#dcdcdc" text-anchor="end" font-weight="normal" >100</text><rect x="369" y="412" width="412" height="310" fill="none" stroke="#8e8e8e" stroke-width="2"/><rect x="360" y="411.0" width="9" height="2" fill="#d8d8d8"/><rect x="360" y="439.2" width="9" height="2" fill="#d8d8d8"/><rect x="360" y="467.4" width="9" height="2" fill="#d8d8d8"/><rect x="360" y="495.5" width="9" height="2" fill="#d8d8d8"/><rect x="360" y="523.7" width="9" height="2" fill="#d8d8d8"/><rect x="360" y="551.9" width="9" height="2" fill="#d8d8d8"/><rect x="360" y="580.1" width="9" height="2" fill="#d8d8d8"/><rect x="360" y="608.3" width="9" height="2" fill="#d8d8d8"/><rect x="360" y="636.5" width="9" height="2" fill="#d8d8d8"/><rect x="360" y="664.6" width="9" height="2" fill="#d8d8d8"/><rect x="360" y="692.8" width="9" height="2" fill="#d8d8d8"/><rect x="360" y="721.0" width="9" height="2" fill="#d8d8d8"/><rect x="368.0" y="722" width="2" height="8" fill="#d8d8d8"/><text x="369.0" y="752.0" font-size="19.4" fill="#dcdcdc" text-anchor="middle" font-weight="normal" >0</text><rect x="422.9" y="722" width="2" height="8" fill="#d8d8d8"/><text x="423.9" y="752.0" font-size="19.4" fill="#dcdcdc" text-anchor="middle" font-weight="normal" >2</text><rect x="477.9" y="722" width="2" height="8" fill="#d8d8d8"/><text x="478.9" y="752.0" font-size="19.4" fill="#dcdcdc" text-anchor="middle" font-weight="normal" >4</text><rect x="532.8" y="722" width="2" height="8" fill="#d8d8d8"/><text x="533.8" y="752.0" font-size="19.4" fill="#dcdcdc" text-anchor="middle" font-weight="normal" >6</text><rect x="587.7" y="722" width="2" height="8" fill="#d8d8d8"/><text x="588.7" y="752.0" font-size="19.4" fill="#dcdcdc" text-anchor="middle" font-weight="normal" >8</text><rect x="642.7" y="722" width="2" height="8" fill="#d8d8d8"/><text x="643.7" y="752.0" font-size="19.4" fill="#dcdcdc" text-anchor="middle" font-weight="normal" >10</text><rect x="697.6" y="722" width="2" height="8" fill="#d8d8d8"/><text x="698.6" y="752.0" font-size="19.4" fill="#dcdcdc" text-anchor="middle" font-weight="normal" >12</text><rect x="752.5" y="722" width="2" height="8" fill="#d8d8d8"/><text x="753.5" y="752.0" font-size="19.4" fill="#dcdcdc" text-anchor="middle" font-weight="normal" >14</text><rect x="876" y="292" width="771" height="431" fill="#222222"/><rect x="876" y="681.0" width="771" height="2" fill="#8e8e8e"/><rect x="867" y="681.0" width="9" height="2" fill="#d8d8d8"/><text x="867.0" y="689.0" font-size="19.4" fill="#dcdcdc" text-anchor="end" font-weight="normal" >96</text><rect x="876" y="594.8" width="771" height="2" fill="#8e8e8e"/><rect x="867" y="594.8" width="9" height="2" fill="#d8d8d8"/><text x="867.0" y="602.8" font-size="19.4" fill="#dcdcdc" text-anchor="end" font-weight="normal" >98</text><rect x="876" y="508.5" width="771" height="2" fill="#8e8e8e"/><rect x="867" y="508.5" width="9" height="2" fill="#d8d8d8"/><text x="867.0" y="516.5" font-size="19.4" fill="#dcdcdc" text-anchor="end" font-weight="normal" >100</text><rect x="876" y="422.2" width="771" height="2" fill="#8e8e8e"/><rect x="867" y="422.2" width="9" height="2" fill="#d8d8d8"/><text x="867.0" y="430.2" font-size="19.4" fill="#dcdcdc" text-anchor="end" font-weight="normal" >102</text><rect x="876" y="336.0" width="771" height="2" fill="#8e8e8e"/><rect x="867" y="336.0" width="9" height="2" fill="#d8d8d8"/><text x="867.0" y="344.0" font-size="19.4" fill="#dcdcdc" text-anchor="end" font-weight="normal" >104</text><text x="1241.0" y="285.6" font-size="20.8" fill="#dcdcdc" text-anchor="middle" font-weight="normal" textLength="112.0" lengthAdjust="spacingAndGlyphs" >RGB Balance</text><clipPath id="c1"><rect x="876" y="292" width="771" height="431"/></clipPath><g clip-path="url(#c1)"><polyline points="876.0,460.9 953.1,597.0 1030.2,537.5 1107.3,474.5 1184.4,448.3 1261.5,436.4 1338.6,439.8 1415.7,444.6 1492.8,444.9 1569.9,438.8 1647.0,464.3" fill="none" stroke="#ff0000" stroke-width="4.2" stroke-linejoin="round"/><polyline points="876.0,464.3 953.1,611.7 1030.2,563.0 1107.3,507.9 1184.4,489.2 1261.5,482.4 1338.6,491.6 1415.7,501.1 1492.8,505.9 1569.9,501.8 1647.0,523.9" fill="none" stroke="#008000" stroke-width="4.2" stroke-linejoin="round"/><polyline points="876.0,425.2 953.1,593.7 1030.2,587.9 1107.3,557.9 1184.4,557.9 1261.5,567.5 1338.6,590.3 1415.7,610.0 1492.8,617.5 1569.9,593.7 1647.0,467.7" fill="none" stroke="#0000ff" stroke-width="4.2" stroke-linejoin="round"/></g><rect x="876" y="292" width="771" height="431" fill="none" stroke="#8e8e8e" stroke-width="2"/><rect x="875.2" y="724" width="1.5" height="7" fill="#d8d8d8"/><text x="876.0" y="752.0" font-size="19.4" fill="#dcdcdc" text-anchor="middle" font-weight="normal" >0</text><rect x="952.4" y="724" width="1.5" height="7" fill="#d8d8d8"/><text x="953.1" y="752.0" font-size="19.4" fill="#dcdcdc" text-anchor="middle" font-weight="normal" >10</text><rect x="1029.5" y="724" width="1.5" height="7" fill="#d8d8d8"/><text x="1030.2" y="752.0" font-size="19.4" fill="#dcdcdc" text-anchor="middle" font-weight="normal" >20</text><rect x="1106.5" y="724" width="1.5" height="7" fill="#d8d8d8"/><text x="1107.3" y="752.0" font-size="19.4" fill="#dcdcdc" text-anchor="middle" font-weight="normal" >30</text><rect x="1183.7" y="724" width="1.5" height="7" fill="#d8d8d8"/><text x="1184.4" y="752.0" font-size="19.4" fill="#dcdcdc" text-anchor="middle" font-weight="normal" >40</text><rect x="1260.8" y="724" width="1.5" height="7" fill="#d8d8d8"/><text x="1261.5" y="752.0" font-size="19.4" fill="#dcdcdc" text-anchor="middle" font-weight="normal" >50</text><rect x="1337.8" y="724" width="1.5" height="7" fill="#d8d8d8"/><text x="1338.6" y="752.0" font-size="19.4" fill="#dcdcdc" text-anchor="middle" font-weight="normal" >60</text><rect x="1415.0" y="724" width="1.5" height="7" fill="#d8d8d8"/><text x="1415.7" y="752.0" font-size="19.4" fill="#dcdcdc" text-anchor="middle" font-weight="normal" >70</text><rect x="1492.0" y="724" width="1.5" height="7" fill="#d8d8d8"/><text x="1492.8" y="752.0" font-size="19.4" fill="#dcdcdc" text-anchor="middle" font-weight="normal" >80</text><rect x="1569.2" y="724" width="1.5" height="7" fill="#d8d8d8"/><text x="1569.9" y="752.0" font-size="19.4" fill="#dcdcdc" text-anchor="middle" font-weight="normal" >90</text><rect x="1646.2" y="724" width="1.5" height="7" fill="#d8d8d8"/><text x="1647.0" y="752.0" font-size="19.4" fill="#dcdcdc" text-anchor="middle" font-weight="normal" >100</text><rect x="1733" y="292" width="172" height="437" fill="#222222"/><rect x="1733" y="687.2" width="172" height="2" fill="#8e8e8e"/><rect x="1725" y="687.2" width="8" height="2" fill="#d8d8d8"/><text x="1725.0" y="695.2" font-size="19.4" fill="#dcdcdc" text-anchor="end" font-weight="normal" >96</text><rect x="1733" y="599.6" width="172" height="2" fill="#8e8e8e"/><rect x="1725" y="599.6" width="8" height="2" fill="#d8d8d8"/><text x="1725.0" y="607.6" font-size="19.4" fill="#dcdcdc" text-anchor="end" font-weight="normal" >98</text><rect x="1733" y="512.0" width="172" height="2" fill="#8e8e8e"/><rect x="1725" y="512.0" width="8" height="2" fill="#d8d8d8"/><text x="1725.0" y="520.0" font-size="19.4" fill="#dcdcdc" text-anchor="end" font-weight="normal" >100</text><rect x="1733" y="424.4" width="172" height="2" fill="#8e8e8e"/><rect x="1725" y="424.4" width="8" height="2" fill="#d8d8d8"/><text x="1725.0" y="432.4" font-size="19.4" fill="#dcdcdc" text-anchor="end" font-weight="normal" >102</text><rect x="1733" y="336.8" width="172" height="2" fill="#8e8e8e"/><rect x="1725" y="336.8" width="8" height="2" fill="#d8d8d8"/><text x="1725.0" y="344.8" font-size="19.4" fill="#dcdcdc" text-anchor="end" font-weight="normal" >104</text><text x="1798.5" y="285.6" font-size="20.8" fill="#dcdcdc" text-anchor="middle" font-weight="normal" textLength="112.0" lengthAdjust="spacingAndGlyphs" >RGB Balance</text><rect x="1749" y="468.7" width="44.5" height="260.3" fill="url(#gr)" stroke="#000" stroke-width="2.2"/><rect x="1795.5" y="528" width="44.0" height="201.0" fill="url(#gg)" stroke="#000" stroke-width="2.2"/><rect x="1841.5" y="474.5" width="44.2" height="254.5" fill="url(#gb)" stroke="#000" stroke-width="2.2"/><rect x="1733" y="292" width="172" height="437" fill="none" stroke="#8e8e8e" stroke-width="2"/><rect x="1732" y="729" width="2" height="8" fill="#d8d8d8"/><rect x="1904" y="729" width="2" height="8" fill="#d8d8d8"/><text x="1818.5" y="752.0" font-size="19.4" fill="#dcdcdc" text-anchor="middle" font-weight="normal" >100</text><rect x="1984.6" y="293.4" width="537.0" height="429.4" fill="#222222"/><rect x="1984.6" y="637.5" width="537.0" height="2" fill="#8e8e8e"/><rect x="1984.6" y="551.4" width="537.0" height="2" fill="#8e8e8e"/><rect x="1984.6" y="465.3" width="537.0" height="2" fill="#8e8e8e"/><rect x="1984.6" y="379.2" width="537.0" height="2" fill="#8e8e8e"/><rect x="1976" y="723.6" width="9" height="2" fill="#d8d8d8"/><text x="1976.0" y="731.6" font-size="19.4" fill="#dcdcdc" text-anchor="end" font-weight="normal" >1.8</text><rect x="1976" y="637.5" width="9" height="2" fill="#d8d8d8"/><text x="1976.0" y="645.5" font-size="19.4" fill="#dcdcdc" text-anchor="end" font-weight="normal" >2</text><rect x="1976" y="551.4" width="9" height="2" fill="#d8d8d8"/><text x="1976.0" y="559.4" font-size="19.4" fill="#dcdcdc" text-anchor="end" font-weight="normal" >2.2</text><rect x="1976" y="465.3" width="9" height="2" fill="#d8d8d8"/><text x="1976.0" y="473.3" font-size="19.4" fill="#dcdcdc" text-anchor="end" font-weight="normal" >2.4</text><rect x="1976" y="379.2" width="9" height="2" fill="#d8d8d8"/><text x="1976.0" y="387.2" font-size="19.4" fill="#dcdcdc" text-anchor="end" font-weight="normal" >2.6</text><rect x="1976" y="293.1" width="9" height="2" fill="#d8d8d8"/><text x="1976.0" y="301.1" font-size="19.4" fill="#dcdcdc" text-anchor="end" font-weight="normal" >2.8</text><text x="2236.4" y="285.6" font-size="20.8" fill="#dcdcdc" text-anchor="middle" font-weight="normal" textLength="146.0" lengthAdjust="spacingAndGlyphs" >Gamma Log/Log</text><clipPath id="c2"><rect x="1984.6" y="293.4" width="537.0" height="429.4"/></clipPath><g clip-path="url(#c2)"><polyline points="1984.6,949.4 2038.3,581.1 2092.0,561.1 2145.7,566.2 2199.4,562.7 2253.1,559.1 2306.8,549.5 2360.5,539.1 2414.2,533.9 2467.9,553.9 2521.6,520.2" fill="none" stroke="#8c8c8c" stroke-width="4.2" stroke-linejoin="round"/><polyline points="2000.7,746.0 2001.2,742.5 2001.8,739.1 2002.3,735.9 2002.9,732.7 2003.4,729.7 2003.9,726.7 2004.5,723.9 2005.0,721.1 2005.5,718.4 2006.1,715.8 2006.6,713.2 2007.2,710.8 2007.7,708.4 2008.2,706.0 2008.8,703.7 2009.3,701.5 2009.8,699.4 2010.4,697.2 2010.9,695.2 2011.4,693.2 2012.0,691.2 2012.5,689.3 2013.1,687.4 2013.6,685.6 2014.1,683.8 2014.7,682.1 2015.2,680.3 2015.7,678.7 2016.3,677.0 2016.8,675.4 2017.4,673.9 2017.9,672.3 2018.4,670.8 2019.0,669.3 2019.5,667.9 2020.0,666.5 2020.6,665.1 2021.1,663.7 2021.7,662.3 2022.2,661.0 2022.7,659.7 2023.3,658.5 2023.8,657.2 2024.3,656.0 2024.9,654.8 2025.4,653.6 2025.9,652.4 2026.5,651.3 2027.0,650.2 2027.6,649.1 2028.1,648.0 2028.6,646.9 2029.2,645.8 2029.7,644.8 2030.2,643.8 2030.8,642.8 2031.3,641.8 2031.9,640.8 2032.4,639.9 2032.9,638.9 2033.5,638.0 2034.0,637.1 2034.5,636.2 2035.1,635.3 2035.6,634.4 2036.2,633.5 2036.7,632.7 2037.2,631.8 2037.8,631.0 2038.3,630.2 2038.8,629.4 2039.4,628.6 2039.9,627.8 2040.4,627.0 2041.0,626.2 2041.5,625.5 2042.1,624.7 2042.6,624.0 2043.1,623.3 2043.7,622.6 2044.2,621.8 2044.7,621.1 2045.3,620.5 2045.8,619.8 2046.4,619.1 2046.9,618.4 2047.4,617.8 2048.0,617.1 2048.5,616.5 2049.0,615.8 2049.6,615.2 2050.1,614.6 2050.7,614.0 2051.2,613.4 2051.7,612.8 2052.3,612.2 2052.8,611.6 2053.3,611.0 2053.9,610.4 2054.4,609.9 2054.9,609.3 2055.5,608.8 2056.0,608.2 2056.6,607.7 2057.1,607.1 2057.6,606.6 2058.2,606.1 2058.7,605.5 2059.2,605.0 2059.8,604.5 2060.3,604.0 2060.9,603.5 2061.4,603.0 2061.9,602.5 2062.5,602.0 2063.0,601.6 2063.5,601.1 2064.1,600.6 2064.6,600.2 2065.2,599.7 2065.7,599.2 2066.2,598.8 2066.8,598.3 2067.3,597.9 2067.8,597.5 2068.4,597.0 2068.9,596.6 2069.4,596.2 2070.0,595.7 2070.5,595.3 2071.1,594.9 2071.6,594.5 2072.1,594.1 2072.7,593.7 2073.2,593.3 2073.7,592.9 2074.3,592.5 2074.8,592.1 2075.4,591.7 2075.9,591.3 2076.4,590.9 2077.0,590.6 2077.5,590.2 2078.0,589.8 2078.6,589.4 2079.1,589.1 2079.6,588.7 2080.2,588.4 2080.7,588.0 2081.3,587.7 2081.8,587.3 2082.3,587.0 2082.9,586.6 2083.4,586.3 2083.9,585.9 2084.5,585.6 2085.0,585.3 2085.6,584.9 2086.1,584.6 2086.6,584.3 2087.2,584.0 2087.7,583.6 2088.2,583.3 2088.8,583.0 2089.3,582.7 2089.9,582.4 2090.4,582.1 2090.9,581.8 2091.5,581.5 2092.0,581.2 2092.5,580.9 2093.1,580.6 2093.6,580.3 2094.1,580.0 2094.7,579.7 2095.2,579.4 2095.8,579.1 2096.3,578.8 2096.8,578.5 2097.4,578.3 2097.9,578.0 2098.4,577.7 2099.0,577.4 2099.5,577.2 2100.1,576.9 2100.6,576.6 2101.1,576.3 2101.7,576.1 2102.2,575.8 2102.7,575.6 2103.3,575.3 2103.8,575.0 2104.4,574.8 2104.9,574.5 2105.4,574.3 2106.0,574.0 2106.5,573.8 2107.0,573.5 2107.6,573.3 2108.1,573.0 2108.6,572.8 2109.2,572.6 2109.7,572.3 2110.3,572.1 2110.8,571.8 2111.3,571.6 2111.9,571.4 2112.4,571.1 2112.9,570.9 2113.5,570.7 2114.0,570.5 2114.6,570.2 2115.1,570.0 2115.6,569.8 2116.2,569.6 2116.7,569.3 2117.2,569.1 2117.8,568.9 2118.3,568.7 2118.8,568.5 2119.4,568.3 2119.9,568.0 2120.5,567.8 2121.0,567.6 2121.5,567.4 2122.1,567.2 2122.6,567.0 2123.1,566.8 2123.7,566.6 2124.2,566.4 2124.8,566.2 2125.3,566.0 2125.8,565.8 2126.4,565.6 2126.9,565.4 2127.4,565.2 2128.0,565.0 2128.5,564.8 2129.1,564.6 2129.6,564.4 2130.1,564.2 2130.7,564.1 2131.2,563.9 2131.7,563.7 2132.3,563.5 2132.8,563.3 2133.3,563.1 2133.9,562.9 2134.4,562.8 2135.0,562.6 2135.5,562.4 2136.0,562.2 2136.6,562.0 2137.1,561.9 2137.6,561.7 2138.2,561.5 2138.7,561.3 2139.3,561.2 2139.8,561.0 2140.3,560.8 2140.9,560.7 2141.4,560.5 2141.9,560.3 2142.5,560.1 2143.0,560.0 2143.6,559.8 2144.1,559.7 2144.6,559.5 2145.2,559.3 2145.7,559.2 2146.2,559.0 2146.8,558.8 2147.3,558.7 2147.8,558.5 2148.4,558.4 2148.9,558.2 2149.5,558.0 2150.0,557.9 2150.5,557.7 2151.1,557.6 2151.6,557.4 2152.1,557.3 2152.7,557.1 2153.2,557.0 2153.8,556.8 2154.3,556.7 2154.8,556.5 2155.4,556.4 2155.9,556.2 2156.4,556.1 2157.0,555.9 2157.5,555.8 2158.1,555.6 2158.6,555.5 2159.1,555.4 2159.7,555.2 2160.2,555.1 2160.7,554.9 2161.3,554.8 2161.8,554.6 2162.3,554.5 2162.9,554.4 2163.4,554.2 2164.0,554.1 2164.5,554.0 2165.0,553.8 2165.6,553.7 2166.1,553.6 2166.6,553.4 2167.2,553.3 2167.7,553.1 2168.3,553.0 2168.8,552.9 2169.3,552.8 2169.9,552.6 2170.4,552.5 2170.9,552.4 2171.5,552.2 2172.0,552.1 2172.5,552.0 2173.1,551.9 2173.6,551.7 2174.2,551.6 2174.7,551.5 2175.2,551.3 2175.8,551.2 2176.3,551.1 2176.8,551.0 2177.4,550.9 2177.9,550.7 2178.5,550.6 2179.0,550.5 2179.5,550.4 2180.1,550.2 2180.6,550.1 2181.1,550.0 2181.7,549.9 2182.2,549.8 2182.8,549.7 2183.3,549.5 2183.8,549.4 2184.4,549.3 2184.9,549.2 2185.4,549.1 2186.0,549.0 2186.5,548.8 2187.0,548.7 2187.6,548.6 2188.1,548.5 2188.7,548.4 2189.2,548.3 2189.7,548.2 2190.3,548.1 2190.8,547.9 2191.3,547.8 2191.9,547.7 2192.4,547.6 2193.0,547.5 2193.5,547.4 2194.0,547.3 2194.6,547.2 2195.1,547.1 2195.6,547.0 2196.2,546.9 2196.7,546.8 2197.3,546.7 2197.8,546.6 2198.3,546.4 2198.9,546.3 2199.4,546.2 2199.9,546.1 2200.5,546.0 2201.0,545.9 2201.5,545.8 2202.1,545.7 2202.6,545.6 2203.2,545.5 2203.7,545.4 2204.2,545.3 2204.8,545.2 2205.3,545.1 2205.8,545.0 2206.4,544.9 2206.9,544.8 2207.5,544.7 2208.0,544.6 2208.5,544.5 2209.1,544.4 2209.6,544.3 2210.1,544.2 2210.7,544.2 2211.2,544.1 2211.8,544.0 2212.3,543.9 2212.8,543.8 2213.4,543.7 2213.9,543.6 2214.4,543.5 2215.0,543.4 2215.5,543.3 2216.0,543.2 2216.6,543.1 2217.1,543.0 2217.7,542.9 2218.2,542.8 2218.7,542.8 2219.3,542.7 2219.8,542.6 2220.3,542.5 2220.9,542.4 2221.4,542.3 2222.0,542.2 2222.5,542.1 2223.0,542.0 2223.6,542.0 2224.1,541.9 2224.6,541.8 2225.2,541.7 2225.7,541.6 2226.2,541.5 2226.8,541.4 2227.3,541.4 2227.9,541.3 2228.4,541.2 2228.9,541.1 2229.5,541.0 2230.0,540.9 2230.5,540.8 2231.1,540.8 2231.6,540.7 2232.2,540.6 2232.7,540.5 2233.2,540.4 2233.8,540.4 2234.3,540.3 2234.8,540.2 2235.4,540.1 2235.9,540.0 2236.5,539.9 2237.0,539.9 2237.5,539.8 2238.1,539.7 2238.6,539.6 2239.1,539.5 2239.7,539.5 2240.2,539.4 2240.7,539.3 2241.3,539.2 2241.8,539.2 2242.4,539.1 2242.9,539.0 2243.4,538.9 2244.0,538.8 2244.5,538.8 2245.0,538.7 2245.6,538.6 2246.1,538.5 2246.7,538.5 2247.2,538.4 2247.7,538.3 2248.3,538.2 2248.8,538.2 2249.3,538.1 2249.9,538.0 2250.4,537.9 2251.0,537.9 2251.5,537.8 2252.0,537.7 2252.6,537.6 2253.1,537.6 2253.6,537.5 2254.2,537.4 2254.7,537.4 2255.2,537.3 2255.8,537.2 2256.3,537.1 2256.9,537.1 2257.4,537.0 2257.9,536.9 2258.5,536.9 2259.0,536.8 2259.5,536.7 2260.1,536.6 2260.6,536.6 2261.2,536.5 2261.7,536.4 2262.2,536.4 2262.8,536.3 2263.3,536.2 2263.8,536.2 2264.4,536.1 2264.9,536.0 2265.5,536.0 2266.0,535.9 2266.5,535.8 2267.1,535.8 2267.6,535.7 2268.1,535.6 2268.7,535.6 2269.2,535.5 2269.7,535.4 2270.3,535.4 2270.8,535.3 2271.4,535.2 2271.9,535.2 2272.4,535.1 2273.0,535.0 2273.5,535.0 2274.0,534.9 2274.6,534.8 2275.1,534.8 2275.7,534.7 2276.2,534.6 2276.7,534.6 2277.3,534.5 2277.8,534.5 2278.3,534.4 2278.9,534.3 2279.4,534.3 2279.9,534.2 2280.5,534.1 2281.0,534.1 2281.6,534.0 2282.1,534.0 2282.6,533.9 2283.2,533.8 2283.7,533.8 2284.2,533.7 2284.8,533.6 2285.3,533.6 2285.9,533.5 2286.4,533.5 2286.9,533.4 2287.5,533.3 2288.0,533.3 2288.5,533.2 2289.1,533.2 2289.6,533.1 2290.2,533.0 2290.7,533.0 2291.2,532.9 2291.8,532.9 2292.3,532.8 2292.8,532.8 2293.4,532.7 2293.9,532.6 2294.4,532.6 2295.0,532.5 2295.5,532.5 2296.1,532.4 2296.6,532.3 2297.1,532.3 2297.7,532.2 2298.2,532.2 2298.7,532.1 2299.3,532.1 2299.8,532.0 2300.4,532.0 2300.9,531.9 2301.4,531.8 2302.0,531.8 2302.5,531.7 2303.0,531.7 2303.6,531.6 2304.1,531.6 2304.7,531.5 2305.2,531.5 2305.7,531.4 2306.3,531.3 2306.8,531.3 2307.3,531.2 2307.9,531.2 2308.4,531.1 2308.9,531.1 2309.5,531.0 2310.0,531.0 2310.6,530.9 2311.1,530.9 2311.6,530.8 2312.2,530.7 2312.7,530.7 2313.2,530.6 2313.8,530.6 2314.3,530.5 2314.9,530.5 2315.4,530.4 2315.9,530.4 2316.5,530.3 2317.0,530.3 2317.5,530.2 2318.1,530.2 2318.6,530.1 2319.2,530.1 2319.7,530.0 2320.2,530.0 2320.8,529.9 2321.3,529.9 2321.8,529.8 2322.4,529.8 2322.9,529.7 2323.4,529.7 2324.0,529.6 2324.5,529.6 2325.1,529.5 2325.6,529.5 2326.1,529.4 2326.7,529.4 2327.2,529.3 2327.7,529.3 2328.3,529.2 2328.8,529.2 2329.4,529.1 2329.9,529.1 2330.4,529.0 2331.0,529.0 2331.5,528.9 2332.0,528.9 2332.6,528.8 2333.1,528.8 2333.7,528.7 2334.2,528.7 2334.7,528.6 2335.3,528.6 2335.8,528.5 2336.3,528.5 2336.9,528.4 2337.4,528.4 2337.9,528.4 2338.5,528.3 2339.0,528.3 2339.6,528.2 2340.1,528.2 2340.6,528.1 2341.2,528.1 2341.7,528.0 2342.2,528.0 2342.8,527.9 2343.3,527.9 2343.9,527.8 2344.4,527.8 2344.9,527.8 2345.5,527.7 2346.0,527.7 2346.5,527.6 2347.1,527.6 2347.6,527.5 2348.1,527.5 2348.7,527.4 2349.2,527.4 2349.8,527.3 2350.3,527.3 2350.8,527.3 2351.4,527.2 2351.9,527.2 2352.4,527.1 2353.0,527.1 2353.5,527.0 2354.1,527.0 2354.6,526.9 2355.1,526.9 2355.7,526.9 2356.2,526.8 2356.7,526.8 2357.3,526.7 2357.8,526.7 2358.4,526.6 2358.9,526.6 2359.4,526.6 2360.0,526.5 2360.5,526.5 2361.0,526.4 2361.6,526.4 2362.1,526.3 2362.6,526.3 2363.2,526.3 2363.7,526.2 2364.3,526.2 2364.8,526.1 2365.3,526.1 2365.9,526.1 2366.4,526.0 2366.9,526.0 2367.5,525.9 2368.0,525.9 2368.6,525.8 2369.1,525.8 2369.6,525.8 2370.2,525.7 2370.7,525.7 2371.2,525.6 2371.8,525.6 2372.3,525.6 2372.9,525.5 2373.4,525.5 2373.9,525.4 2374.5,525.4 2375.0,525.4 2375.5,525.3 2376.1,525.3 2376.6,525.2 2377.1,525.2 2377.7,525.2 2378.2,525.1 2378.8,525.1 2379.3,525.0 2379.8,525.0 2380.4,525.0 2380.9,524.9 2381.4,524.9 2382.0,524.8 2382.5,524.8 2383.1,524.8 2383.6,524.7 2384.1,524.7 2384.7,524.7 2385.2,524.6 2385.7,524.6 2386.3,524.5 2386.8,524.5 2387.3,524.5 2387.9,524.4 2388.4,524.4 2389.0,524.3 2389.5,524.3 2390.0,524.3 2390.6,524.2 2391.1,524.2 2391.6,524.2 2392.2,524.1 2392.7,524.1 2393.3,524.0 2393.8,524.0 2394.3,524.0 2394.9,523.9 2395.4,523.9 2395.9,523.9 2396.5,523.8 2397.0,523.8 2397.6,523.8 2398.1,523.7 2398.6,523.7 2399.2,523.6 2399.7,523.6 2400.2,523.6 2400.8,523.5 2401.3,523.5 2401.8,523.5 2402.4,523.4 2402.9,523.4 2403.5,523.4 2404.0,523.3 2404.5,523.3 2405.1,523.2 2405.6,523.2 2406.1,523.2 2406.7,523.1 2407.2,523.1 2407.8,523.1 2408.3,523.0 2408.8,523.0 2409.4,523.0 2409.9,522.9 2410.4,522.9 2411.0,522.9 2411.5,522.8 2412.1,522.8 2412.6,522.8 2413.1,522.7 2413.7,522.7 2414.2,522.6 2414.7,522.6 2415.3,522.6 2415.8,522.5 2416.3,522.5 2416.9,522.5 2417.4,522.4 2418.0,522.4 2418.5,522.4 2419.0,522.3 2419.6,522.3 2420.1,522.3 2420.6,522.2 2421.2,522.2 2421.7,522.2 2422.3,522.1 2422.8,522.1 2423.3,522.1 2423.9,522.0 2424.4,522.0 2424.9,522.0 2425.5,521.9 2426.0,521.9 2426.6,521.9 2427.1,521.8 2427.6,521.8 2428.2,521.8 2428.7,521.7 2429.2,521.7 2429.8,521.7 2430.3,521.6 2430.8,521.6 2431.4,521.6 2431.9,521.6 2432.5,521.5 2433.0,521.5 2433.5,521.5 2434.1,521.4 2434.6,521.4 2435.1,521.4 2435.7,521.3 2436.2,521.3 2436.8,521.3 2437.3,521.2 2437.8,521.2 2438.4,521.2 2438.9,521.1 2439.4,521.1 2440.0,521.1 2440.5,521.0 2441.0,521.0 2441.6,521.0 2442.1,520.9 2442.7,520.9 2443.2,520.9 2443.7,520.9 2444.3,520.8 2444.8,520.8 2445.3,520.8 2445.9,520.7 2446.4,520.7 2447.0,520.7 2447.5,520.6 2448.0,520.6 2448.6,520.6 2449.1,520.6 2449.6,520.5 2450.2,520.5 2450.7,520.5 2451.3,520.4 2451.8,520.4 2452.3,520.4 2452.9,520.3 2453.4,520.3 2453.9,520.3 2454.5,520.2 2455.0,520.2 2455.5,520.2 2456.1,520.2 2456.6,520.1 2457.2,520.1 2457.7,520.1 2458.2,520.0 2458.8,520.0 2459.3,520.0 2459.8,520.0 2460.4,519.9 2460.9,519.9 2461.5,519.9 2462.0,519.8 2462.5,519.8 2463.1,519.8 2463.6,519.8 2464.1,519.7 2464.7,519.7 2465.2,519.7 2465.8,519.6 2466.3,519.6 2466.8,519.6 2467.4,519.5 2467.9,519.5 2468.4,519.5 2469.0,519.5 2469.5,519.4 2470.0,519.4 2470.6,519.4 2471.1,519.4 2471.7,519.3 2472.2,519.3 2472.7,519.3 2473.3,519.2 2473.8,519.2 2474.3,519.2 2474.9,519.2 2475.4,519.1 2476.0,519.1 2476.5,519.1 2477.0,519.0 2477.6,519.0 2478.1,519.0 2478.6,519.0 2479.2,518.9 2479.7,518.9 2480.3,518.9 2480.8,518.9 2481.3,518.8 2481.9,518.8 2482.4,518.8 2482.9,518.7 2483.5,518.7 2484.0,518.7 2484.5,518.7 2485.1,518.6 2485.6,518.6 2486.2,518.6 2486.7,518.6 2487.2,518.5 2487.8,518.5 2488.3,518.5 2488.8,518.4 2489.4,518.4 2489.9,518.4 2490.5,518.4 2491.0,518.3 2491.5,518.3 2492.1,518.3 2492.6,518.3 2493.1,518.2 2493.7,518.2 2494.2,518.2 2494.8,518.2 2495.3,518.1 2495.8,518.1 2496.4,518.1 2496.9,518.1 2497.4,518.0 2498.0,518.0 2498.5,518.0 2499.0,517.9 2499.6,517.9 2500.1,517.9 2500.7,517.9 2501.2,517.8 2501.7,517.8 2502.3,517.8 2502.8,517.8 2503.3,517.7 2503.9,517.7 2504.4,517.7 2505.0,517.7 2505.5,517.6 2506.0,517.6 2506.6,517.6 2507.1,517.6 2507.6,517.5 2508.2,517.5 2508.7,517.5 2509.2,517.5 2509.8,517.4 2510.3,517.4 2510.9,517.4 2511.4,517.4 2511.9,517.3 2512.5,517.3 2513.0,517.3 2513.5,517.3 2514.1,517.2 2514.6,517.2 2515.2,517.2 2515.7,517.2 2516.2,517.1 2516.8,517.1 2517.3,517.1 2517.8,517.1 2518.4,517.0 2518.9,517.0 2519.5,517.0 2520.0,517.0 2520.5,517.0 2521.1,516.9 2521.6,517.1" fill="none" stroke="#ffff00" stroke-width="4.2" stroke-linejoin="round"/></g><rect x="1984.6" y="293.4" width="537.0" height="429.4" fill="none" stroke="#8e8e8e" stroke-width="2"/><rect x="1983.6" y="723.8" width="2" height="8" fill="#d8d8d8"/><text x="1984.6" y="750.5" font-size="19.4" fill="#dcdcdc" text-anchor="middle" font-weight="normal" >0</text><rect x="2091.0" y="723.8" width="2" height="8" fill="#d8d8d8"/><text x="2092.0" y="750.5" font-size="19.4" fill="#dcdcdc" text-anchor="middle" font-weight="normal" >20</text><rect x="2198.4" y="723.8" width="2" height="8" fill="#d8d8d8"/><text x="2199.4" y="750.5" font-size="19.4" fill="#dcdcdc" text-anchor="middle" font-weight="normal" >40</text><rect x="2305.8" y="723.8" width="2" height="8" fill="#d8d8d8"/><text x="2306.8" y="750.5" font-size="19.4" fill="#dcdcdc" text-anchor="middle" font-weight="normal" >60</text><rect x="2413.2" y="723.8" width="2" height="8" fill="#d8d8d8"/><text x="2414.2" y="750.5" font-size="19.4" fill="#dcdcdc" text-anchor="middle" font-weight="normal" >80</text><rect x="2520.6" y="723.8" width="2" height="8" fill="#d8d8d8"/><text x="2521.6" y="750.5" font-size="19.4" fill="#dcdcdc" text-anchor="middle" font-weight="normal" >100</text><text x="418.0" y="809.5" font-size="41.7" fill="#f0f0f0" text-anchor="start" font-weight="normal" textLength="291.0" lengthAdjust="spacingAndGlyphs" >Avg dE2000: 2.7</text><text x="974.6" y="809.5" font-size="41.7" fill="#f0f0f0" text-anchor="start" font-weight="normal" textLength="256.0" lengthAdjust="spacingAndGlyphs" >Avg CCT: 6147</text><text x="1494.0" y="809.5" font-size="41.7" fill="#f0f0f0" text-anchor="start" font-weight="normal" textLength="348.0" lengthAdjust="spacingAndGlyphs" >Contrast Ratio: 833</text><text x="2022.8" y="809.5" font-size="41.7" fill="#f0f0f0" text-anchor="start" font-weight="normal" textLength="425.7" lengthAdjust="spacingAndGlyphs" >Average Gamma: 2.191</text><rect x="301.5" y="836" width="2253.5" height="176" fill="#000"/><rect x="430" y="836" width="1" height="177" fill="#0c0c0c"/><g transform="translate(449 897) rotate(-90)"><text x="0.0" y="0.0" font-size="17" fill="#f0f0f0" text-anchor="start" font-weight="normal" textLength="47.0" lengthAdjust="spacingAndGlyphs" >Actual</text></g><g transform="translate(449 974) rotate(-90)"><text x="0.0" y="0.0" font-size="17" fill="#f0f0f0" text-anchor="start" font-weight="normal" textLength="46.0" lengthAdjust="spacingAndGlyphs" >Target</text></g><rect x="461.5" y="843" width="162" height="69" fill="#060608" shape-rendering="crispEdges"/><rect x="461.5" y="912" width="162" height="70" fill="#000000" shape-rendering="crispEdges"/><rect x="461.5" y="843.5" width="162" height="138" fill="none" stroke="#f4f4f4" stroke-width="2"/><text x="542.5" y="1001.5" font-size="17" fill="#f4f4f4" text-anchor="middle" font-weight="normal" >0</text><rect x="651.5" y="843" width="162" height="69" fill="#181818" shape-rendering="crispEdges"/><rect x="651.5" y="912" width="162" height="70" fill="#1c1c1c" shape-rendering="crispEdges"/><rect x="651.5" y="843.5" width="162" height="138" fill="none" stroke="#f4f4f4" stroke-width="2"/><text x="732.5" y="1001.5" font-size="17" fill="#f4f4f4" text-anchor="middle" font-weight="normal" >10</text><rect x="841.5" y="843" width="162" height="69" fill="#323130" shape-rendering="crispEdges"/><rect x="841.5" y="912" width="162" height="70" fill="#363636" shape-rendering="crispEdges"/><rect x="841.5" y="843.5" width="162" height="138" fill="none" stroke="#f4f4f4" stroke-width="2"/><text x="922.5" y="1001.5" font-size="17" fill="#f4f4f4" text-anchor="middle" font-weight="normal" >20</text><rect x="1031.5" y="843" width="162" height="69" fill="#4c4a46" shape-rendering="crispEdges"/><rect x="1031.5" y="912" width="162" height="70" fill="#4d4d4d" shape-rendering="crispEdges"/><rect x="1031.5" y="843.5" width="162" height="138" fill="none" stroke="#f4f4f4" stroke-width="2"/><text x="1112.5" y="1001.5" font-size="17" fill="#f4f4f4" text-anchor="middle" font-weight="normal" >30</text><rect x="1221.5" y="843" width="162" height="69" fill="#6a6863" shape-rendering="crispEdges"/><rect x="1221.5" y="912" width="162" height="70" fill="#686868" shape-rendering="crispEdges"/><rect x="1221.5" y="843.5" width="162" height="138" fill="none" stroke="#f4f4f4" stroke-width="2"/><text x="1302.5" y="1001.5" font-size="17" fill="#f4f4f4" text-anchor="middle" font-weight="normal" >40</text><rect x="1411.5" y="843" width="162" height="69" fill="#86837d" shape-rendering="crispEdges"/><rect x="1411.5" y="912" width="162" height="70" fill="#838383" shape-rendering="crispEdges"/><rect x="1411.5" y="843.5" width="162" height="138" fill="none" stroke="#f4f4f4" stroke-width="2"/><text x="1492.5" y="1001.5" font-size="17" fill="#f4f4f4" text-anchor="middle" font-weight="normal" >50</text><rect x="1601.5" y="843" width="162" height="69" fill="#9e9b93" shape-rendering="crispEdges"/><rect x="1601.5" y="912" width="162" height="70" fill="#9a9a9a" shape-rendering="crispEdges"/><rect x="1601.5" y="843.5" width="162" height="138" fill="none" stroke="#f4f4f4" stroke-width="2"/><text x="1682.5" y="1001.5" font-size="17" fill="#f4f4f4" text-anchor="middle" font-weight="normal" >60</text><rect x="1791.5" y="843" width="162" height="69" fill="#b7b4ad" shape-rendering="crispEdges"/><rect x="1791.5" y="912" width="162" height="70" fill="#b1b1b1" shape-rendering="crispEdges"/><rect x="1791.5" y="843.5" width="162" height="138" fill="none" stroke="#f4f4f4" stroke-width="2"/><text x="1872.5" y="1001.5" font-size="17" fill="#f4f4f4" text-anchor="middle" font-weight="normal" >70</text><rect x="1981.5" y="843" width="162" height="69" fill="#d3cec6" shape-rendering="crispEdges"/><rect x="1981.5" y="912" width="162" height="70" fill="#cccccc" shape-rendering="crispEdges"/><rect x="1981.5" y="843.5" width="162" height="138" fill="none" stroke="#f4f4f4" stroke-width="2"/><text x="2062.5" y="1001.5" font-size="17" fill="#f4f4f4" text-anchor="middle" font-weight="normal" >80</text><rect x="2171.5" y="843" width="162" height="69" fill="#e8e6df" shape-rendering="crispEdges"/><rect x="2171.5" y="912" width="162" height="70" fill="#e5e5e5" shape-rendering="crispEdges"/><rect x="2171.5" y="843.5" width="162" height="138" fill="none" stroke="#f4f4f4" stroke-width="2"/><text x="2252.5" y="1001.5" font-size="17" fill="#f4f4f4" text-anchor="middle" font-weight="normal" >90</text><rect x="2361.5" y="843" width="162" height="69" fill="#fffdff" shape-rendering="crispEdges"/><rect x="2361.5" y="912" width="162" height="70" fill="#fcfdfc" shape-rendering="crispEdges"/><rect x="2361.5" y="843.5" width="162" height="138" fill="none" stroke="#f4f4f4" stroke-width="2"/><text x="2442.5" y="1001.5" font-size="17" fill="#f4f4f4" text-anchor="middle" font-weight="normal" >100</text><text x="330.0" y="1103.3" font-size="40.3" fill="#f0f0f0" text-anchor="start" font-weight="normal" textLength="295.6" lengthAdjust="spacingAndGlyphs" >Current Reading</text><text x="330.0" y="1161.0" font-size="33" fill="#f0f0f0" text-anchor="start" font-weight="normal" textLength="118.0" lengthAdjust="spacingAndGlyphs" >x: 0.313</text><text x="532.0" y="1161.0" font-size="33" fill="#f0f0f0" text-anchor="start" font-weight="normal" textLength="138.0" lengthAdjust="spacingAndGlyphs" >y: 0.3256</text><text x="330.0" y="1206.7" font-size="33" fill="#f0f0f0" text-anchor="start" font-weight="normal" textLength="150.0" lengthAdjust="spacingAndGlyphs" >u': 0.1994</text><text x="532.0" y="1206.7" font-size="33" fill="#f0f0f0" text-anchor="start" font-weight="normal" textLength="147.0" lengthAdjust="spacingAndGlyphs" >v': 0.4665</text><text x="330.0" y="1252.0" font-size="33" fill="#f0f0f0" text-anchor="start" font-weight="normal" textLength="234.0" lengthAdjust="spacingAndGlyphs" >cd/m²: 364.362</text><text x="330.0" y="1299.0" font-size="33" fill="#f0f0f0" text-anchor="start" font-weight="normal" textLength="209.0" lengthAdjust="spacingAndGlyphs" >ΔE 2000: 2.94</text><text x="940.5" y="1058.0" font-size="20.8" fill="#dcdcdc" text-anchor="middle" font-weight="normal" textLength="102.0" lengthAdjust="spacingAndGlyphs" >CIE 1931 xy</text><rect x="795" y="1063" width="340" height="5" fill="url(#cr0)" shape-rendering="crispEdges"/><rect x="795" y="1068" width="340" height="5" fill="url(#cr1)" shape-rendering="crispEdges"/><rect x="795" y="1073" width="340" height="5" fill="url(#cr2)" shape-rendering="crispEdges"/><rect x="795" y="1078" width="340" height="5" fill="url(#cr3)" shape-rendering="crispEdges"/><rect x="795" y="1083" width="340" height="5" fill="url(#cr4)" shape-rendering="crispEdges"/><rect x="795" y="1088" width="340" height="5" fill="url(#cr5)" shape-rendering="crispEdges"/><rect x="795" y="1093" width="340" height="5" fill="url(#cr6)" shape-rendering="crispEdges"/><rect x="795" y="1098" width="340" height="5" fill="url(#cr7)" shape-rendering="crispEdges"/><rect x="795" y="1103" width="340" height="5" fill="url(#cr8)" shape-rendering="crispEdges"/><rect x="795" y="1108" width="340" height="5" fill="url(#cr9)" shape-rendering="crispEdges"/><rect x="795" y="1113" width="340" height="5" fill="url(#cr10)" shape-rendering="crispEdges"/><rect x="795" y="1118" width="340" height="5" fill="url(#cr11)" shape-rendering="crispEdges"/><rect x="795" y="1123" width="340" height="5" fill="url(#cr12)" shape-rendering="crispEdges"/><rect x="795" y="1128" width="340" height="5" fill="url(#cr13)" shape-rendering="crispEdges"/><rect x="795" y="1133" width="340" height="5" fill="url(#cr14)" shape-rendering="crispEdges"/><rect x="795" y="1138" width="340" height="5" fill="url(#cr15)" shape-rendering="crispEdges"/><rect x="795" y="1143" width="340" height="5" fill="url(#cr16)" shape-rendering="crispEdges"/><rect x="795" y="1148" width="340" height="5" fill="url(#cr17)" shape-rendering="crispEdges"/><rect x="795" y="1153" width="340" height="5" fill="url(#cr18)" shape-rendering="crispEdges"/><rect x="795" y="1158" width="340" height="5" fill="url(#cr19)" shape-rendering="crispEdges"/><rect x="795" y="1163" width="340" height="5" fill="url(#cr20)" shape-rendering="crispEdges"/><rect x="795" y="1168" width="340" height="5" fill="url(#cr21)" shape-rendering="crispEdges"/><rect x="795" y="1173" width="340" height="5" fill="url(#cr22)" shape-rendering="crispEdges"/><rect x="795" y="1178" width="340" height="5" fill="url(#cr23)" shape-rendering="crispEdges"/><rect x="795" y="1183" width="340" height="5" fill="url(#cr24)" shape-rendering="crispEdges"/><rect x="795" y="1188" width="340" height="5" fill="url(#cr25)" shape-rendering="crispEdges"/><rect x="795" y="1193" width="340" height="5" fill="url(#cr26)" shape-rendering="crispEdges"/><rect x="795" y="1198" width="340" height="5" fill="url(#cr27)" shape-rendering="crispEdges"/><rect x="795" y="1203" width="340" height="5" fill="url(#cr28)" shape-rendering="crispEdges"/><rect x="795" y="1208" width="340" height="5" fill="url(#cr29)" shape-rendering="crispEdges"/><rect x="795" y="1213" width="340" height="5" fill="url(#cr30)" shape-rendering="crispEdges"/><rect x="795" y="1218" width="340" height="5" fill="url(#cr31)" shape-rendering="crispEdges"/><rect x="795" y="1223" width="340" height="5" fill="url(#cr32)" shape-rendering="crispEdges"/><rect x="795" y="1228" width="340" height="5" fill="url(#cr33)" shape-rendering="crispEdges"/><rect x="795" y="1233" width="340" height="5" fill="url(#cr34)" shape-rendering="crispEdges"/><rect x="795" y="1238" width="340" height="5" fill="url(#cr35)" shape-rendering="crispEdges"/><rect x="795" y="1243" width="340" height="5" fill="url(#cr36)" shape-rendering="crispEdges"/><rect x="795" y="1248" width="340" height="5" fill="url(#cr37)" shape-rendering="crispEdges"/><rect x="795" y="1253" width="340" height="5" fill="url(#cr38)" shape-rendering="crispEdges"/><rect x="795" y="1258" width="340" height="5" fill="url(#cr39)" shape-rendering="crispEdges"/><rect x="795" y="1263" width="340" height="5" fill="url(#cr40)" shape-rendering="crispEdges"/><rect x="795" y="1268" width="340" height="5" fill="url(#cr41)" shape-rendering="crispEdges"/><rect x="795" y="1273" width="340" height="5" fill="url(#cr42)" shape-rendering="crispEdges"/><rect x="795" y="1278" width="340" height="5" fill="url(#cr43)" shape-rendering="crispEdges"/><rect x="795" y="1283" width="340" height="5" fill="url(#cr44)" shape-rendering="crispEdges"/><clipPath id="c3"><rect x="795" y="1063.5" width="340" height="224.5"/></clipPath><g clip-path="url(#c3)"><path d="M836 1289 Q 980 1185 1136 1100" fill="none" stroke="#000" stroke-width="3.6"/></g><rect x="795" y="1063.5" width="340" height="224.5" fill="none" stroke="#9a9a9a" stroke-width="3"/><rect x="955" y="1166" width="19" height="18" fill="#fff" stroke="#000" stroke-width="2.2"/><circle cx="961.4" cy="1203.5" r="6.3" fill="rgb(26,26,26)" stroke="#111" stroke-width="1.6"/><circle cx="1008.3" cy="1152.4" r="6.3" fill="rgb(51,51,51)" stroke="#111" stroke-width="1.6"/><circle cx="1019.1" cy="1141.6" r="6.3" fill="rgb(77,77,77)" stroke="#111" stroke-width="1.6"/><circle cx="1022.5" cy="1137.5" r="6.3" fill="rgb(102,102,102)" stroke="#111" stroke-width="1.6"/><circle cx="1023.2" cy="1135.7" r="6.3" fill="rgb(128,128,128)" stroke="#111" stroke-width="1.6"/><circle cx="1023.9" cy="1134.8" r="6.3" fill="rgb(153,153,153)" stroke="#111" stroke-width="1.6"/><circle cx="1022.5" cy="1135.2" r="6.3" fill="rgb(179,179,179)" stroke="#111" stroke-width="1.6"/><circle cx="1019.1" cy="1138.0" r="6.3" fill="rgb(204,204,204)" stroke="#111" stroke-width="1.6"/><circle cx="1010.3" cy="1147.4" r="6.3" fill="rgb(230,230,230)" stroke="#111" stroke-width="1.6"/><circle cx="966.2" cy="1191.3" r="6.3" fill="rgb(255,255,255)" stroke="#111" stroke-width="1.6"/><rect x="809.0" y="1289.5" width="2" height="8" fill="#d8d8d8"/><text x="810.0" y="1319.5" font-size="19.4" fill="#dcdcdc" text-anchor="middle" font-weight="normal" >0.29</text><rect x="876.9" y="1289.5" width="2" height="8" fill="#d8d8d8"/><text x="877.9" y="1319.5" font-size="19.4" fill="#dcdcdc" text-anchor="middle" font-weight="normal" >0.3</text><rect x="944.8" y="1289.5" width="2" height="8" fill="#d8d8d8"/><text x="945.8" y="1319.5" font-size="19.4" fill="#dcdcdc" text-anchor="middle" font-weight="normal" >0.31</text><rect x="1012.7" y="1289.5" width="2" height="8" fill="#d8d8d8"/><text x="1013.7" y="1319.5" font-size="19.4" fill="#dcdcdc" text-anchor="middle" font-weight="normal" >0.32</text><rect x="1080.6" y="1289.5" width="2" height="8" fill="#d8d8d8"/><text x="1081.6" y="1319.5" font-size="19.4" fill="#dcdcdc" text-anchor="middle" font-weight="normal" >0.33</text><rect x="787" y="1127.2" width="8" height="2" fill="#d8d8d8"/><text x="787.0" y="1135.2" font-size="19.4" fill="#dcdcdc" text-anchor="end" font-weight="normal" >0.34</text><rect x="787" y="1217.6" width="8" height="2" fill="#d8d8d8"/><text x="787.0" y="1225.6" font-size="19.4" fill="#dcdcdc" text-anchor="end" font-weight="normal" >0.32</text><rect x="1150" y="1025.5" width="1398.5" height="310" fill="none" stroke="#d8d8d8" stroke-width="1.6" stroke-dasharray="2 3"/><rect x="1151.6" y="1026.5" width="1152.4" height="33" fill="url(#hdr)"/><text x="1365.5" y="1049.5" font-size="19.4" fill="#f0f0f0" text-anchor="middle" font-weight="normal" >0</text><text x="1459.1" y="1049.5" font-size="19.4" fill="#f0f0f0" text-anchor="middle" font-weight="normal" >10</text><text x="1548.1" y="1049.5" font-size="19.4" fill="#f0f0f0" text-anchor="middle" font-weight="normal" >20</text><text x="1637.1" y="1049.5" font-size="19.4" fill="#f0f0f0" text-anchor="middle" font-weight="normal" >30</text><text x="1726.1" y="1049.5" font-size="19.4" fill="#f0f0f0" text-anchor="middle" font-weight="normal" >40</text><text x="1815.1" y="1049.5" font-size="19.4" fill="#f0f0f0" text-anchor="middle" font-weight="normal" >50</text><text x="1904.1" y="1049.5" font-size="19.4" fill="#f0f0f0" text-anchor="middle" font-weight="normal" >60</text><text x="1993.1" y="1049.5" font-size="19.4" fill="#f0f0f0" text-anchor="middle" font-weight="normal" >70</text><text x="2082.1" y="1049.5" font-size="19.4" fill="#f0f0f0" text-anchor="middle" font-weight="normal" >80</text><text x="2171.1" y="1049.5" font-size="19.4" fill="#f0f0f0" text-anchor="middle" font-weight="normal" >90</text><text x="2260.1" y="1049.5" font-size="19.4" fill="#f0f0f0" text-anchor="middle" font-weight="normal" >100</text><rect x="1151.6" y="1059.0" width="1152.4" height="31.5" fill="#3e3e3e"/><text x="1163.7" y="1081.8" font-size="19.4" fill="#f4f4f4" text-anchor="start" font-weight="bold" textLength="66.0" lengthAdjust="spacingAndGlyphs" >x: CIE31</text><text x="1320.0" y="1081.8" font-size="19.4" fill="#f0f0f0" text-anchor="start" font-weight="normal" textLength="53.5" lengthAdjust="spacingAndGlyphs" >0.2740</text><text x="1418.1" y="1081.8" font-size="19.4" fill="#f0f0f0" text-anchor="start" font-weight="normal" textLength="53.5" lengthAdjust="spacingAndGlyphs" >0.3123</text><text x="1507.1" y="1081.8" font-size="19.4" fill="#f0f0f0" text-anchor="start" font-weight="normal" textLength="53.5" lengthAdjust="spacingAndGlyphs" >0.3192</text><text x="1596.1" y="1081.8" font-size="19.4" fill="#f0f0f0" text-anchor="start" font-weight="normal" textLength="53.5" lengthAdjust="spacingAndGlyphs" >0.3208</text><text x="1685.1" y="1081.8" font-size="19.4" fill="#f0f0f0" text-anchor="start" font-weight="normal" textLength="53.5" lengthAdjust="spacingAndGlyphs" >0.3213</text><text x="1774.1" y="1081.8" font-size="19.4" fill="#f0f0f0" text-anchor="start" font-weight="normal" textLength="53.5" lengthAdjust="spacingAndGlyphs" >0.3214</text><text x="1863.1" y="1081.8" font-size="19.4" fill="#f0f0f0" text-anchor="start" font-weight="normal" textLength="53.5" lengthAdjust="spacingAndGlyphs" >0.3215</text><text x="1952.1" y="1081.8" font-size="19.4" fill="#f0f0f0" text-anchor="start" font-weight="normal" textLength="53.5" lengthAdjust="spacingAndGlyphs" >0.3213</text><text x="2041.1" y="1081.8" font-size="19.4" fill="#f0f0f0" text-anchor="start" font-weight="normal" textLength="53.5" lengthAdjust="spacingAndGlyphs" >0.3208</text><text x="2130.1" y="1081.8" font-size="19.4" fill="#f0f0f0" text-anchor="start" font-weight="normal" textLength="53.5" lengthAdjust="spacingAndGlyphs" >0.3195</text><text x="2219.1" y="1081.8" font-size="19.4" fill="#f0f0f0" text-anchor="start" font-weight="normal" textLength="53.5" lengthAdjust="spacingAndGlyphs" >0.3130</text><rect x="1151.6" y="1090.5" width="1152.4" height="31.5" fill="#838383"/><text x="1163.7" y="1113.3" font-size="19.4" fill="#f4f4f4" text-anchor="start" font-weight="bold" textLength="66.0" lengthAdjust="spacingAndGlyphs" >y: CIE31</text><text x="1320.0" y="1113.3" font-size="19.4" fill="#ececec" text-anchor="start" font-weight="normal" textLength="53.5" lengthAdjust="spacingAndGlyphs" >0.2606</text><text x="1418.1" y="1113.3" font-size="19.4" fill="#ececec" text-anchor="start" font-weight="normal" textLength="53.5" lengthAdjust="spacingAndGlyphs" >0.3229</text><text x="1507.1" y="1113.3" font-size="19.4" fill="#ececec" text-anchor="start" font-weight="normal" textLength="53.5" lengthAdjust="spacingAndGlyphs" >0.3342</text><text x="1596.1" y="1113.3" font-size="19.4" fill="#ececec" text-anchor="start" font-weight="normal" textLength="53.5" lengthAdjust="spacingAndGlyphs" >0.3366</text><text x="1685.1" y="1113.3" font-size="19.4" fill="#ececec" text-anchor="start" font-weight="normal" textLength="53.5" lengthAdjust="spacingAndGlyphs" >0.3375</text><text x="1774.1" y="1113.3" font-size="19.4" fill="#ececec" text-anchor="start" font-weight="normal" textLength="53.5" lengthAdjust="spacingAndGlyphs" >0.3379</text><text x="1863.1" y="1113.3" font-size="19.4" fill="#ececec" text-anchor="start" font-weight="normal" textLength="53.5" lengthAdjust="spacingAndGlyphs" >0.3381</text><text x="1952.1" y="1113.3" font-size="19.4" fill="#ececec" text-anchor="start" font-weight="normal" textLength="53.5" lengthAdjust="spacingAndGlyphs" >0.3380</text><text x="2041.1" y="1113.3" font-size="19.4" fill="#ececec" text-anchor="start" font-weight="normal" textLength="53.5" lengthAdjust="spacingAndGlyphs" >0.3374</text><text x="2130.1" y="1113.3" font-size="19.4" fill="#ececec" text-anchor="start" font-weight="normal" textLength="53.5" lengthAdjust="spacingAndGlyphs" >0.3353</text><text x="2219.1" y="1113.3" font-size="19.4" fill="#ececec" text-anchor="start" font-weight="normal" textLength="53.5" lengthAdjust="spacingAndGlyphs" >0.3256</text><rect x="1151.6" y="1122.0" width="1152.4" height="31.5" fill="#3e3e3e"/><text x="1163.7" y="1144.8" font-size="19.4" fill="#f4f4f4" text-anchor="start" font-weight="bold" textLength="12.5" lengthAdjust="spacingAndGlyphs" >Y</text><text x="1320.0" y="1144.8" font-size="19.4" fill="#f0f0f0" text-anchor="start" font-weight="normal" textLength="53.5" lengthAdjust="spacingAndGlyphs" >0.4371</text><text x="1418.1" y="1144.8" font-size="19.4" fill="#f0f0f0" text-anchor="start" font-weight="normal" textLength="53.5" lengthAdjust="spacingAndGlyphs" >2.7935</text><text x="1507.1" y="1144.8" font-size="19.4" fill="#f0f0f0" text-anchor="start" font-weight="normal" textLength="63.1" lengthAdjust="spacingAndGlyphs" >10.9147</text><text x="1596.1" y="1144.8" font-size="19.4" fill="#f0f0f0" text-anchor="start" font-weight="normal" textLength="63.1" lengthAdjust="spacingAndGlyphs" >26.4085</text><text x="1685.1" y="1144.8" font-size="19.4" fill="#f0f0f0" text-anchor="start" font-weight="normal" textLength="63.1" lengthAdjust="spacingAndGlyphs" >49.6120</text><text x="1774.1" y="1144.8" font-size="19.4" fill="#f0f0f0" text-anchor="start" font-weight="normal" textLength="63.1" lengthAdjust="spacingAndGlyphs" >80.8511</text><text x="1863.1" y="1144.8" font-size="19.4" fill="#f0f0f0" text-anchor="start" font-weight="normal" textLength="72.7" lengthAdjust="spacingAndGlyphs" >118.0241</text><text x="1952.1" y="1144.8" font-size="19.4" fill="#f0f0f0" text-anchor="start" font-weight="normal" textLength="72.7" lengthAdjust="spacingAndGlyphs" >163.3998</text><text x="2041.1" y="1144.8" font-size="19.4" fill="#f0f0f0" text-anchor="start" font-weight="normal" textLength="72.7" lengthAdjust="spacingAndGlyphs" >220.8879</text><text x="2130.1" y="1144.8" font-size="19.4" fill="#f0f0f0" text-anchor="start" font-weight="normal" textLength="72.7" lengthAdjust="spacingAndGlyphs" >290.4707</text><text x="2219.1" y="1144.8" font-size="19.4" fill="#f0f0f0" text-anchor="start" font-weight="normal" textLength="72.7" lengthAdjust="spacingAndGlyphs" >364.3620</text><rect x="1151.6" y="1153.5" width="1152.4" height="31.5" fill="#838383"/><text x="1163.7" y="1176.3" font-size="19.4" fill="#f4f4f4" text-anchor="start" font-weight="bold" textLength="69.5" lengthAdjust="spacingAndGlyphs" >Target Y</text><text x="1320.0" y="1176.3" font-size="19.4" fill="#ececec" text-anchor="start" font-weight="normal" textLength="53.5" lengthAdjust="spacingAndGlyphs" >0.0000</text><text x="1418.1" y="1176.3" font-size="19.4" fill="#ececec" text-anchor="start" font-weight="normal" textLength="53.5" lengthAdjust="spacingAndGlyphs" >3.7638</text><text x="1507.1" y="1176.3" font-size="19.4" fill="#ececec" text-anchor="start" font-weight="normal" textLength="63.1" lengthAdjust="spacingAndGlyphs" >12.0621</text><text x="1596.1" y="1176.3" font-size="19.4" fill="#ececec" text-anchor="start" font-weight="normal" textLength="63.1" lengthAdjust="spacingAndGlyphs" >26.3331</text><text x="1685.1" y="1176.3" font-size="19.4" fill="#ececec" text-anchor="start" font-weight="normal" textLength="63.1" lengthAdjust="spacingAndGlyphs" >48.4122</text><rect x="1770.6" y="1155.5" width="87.5" height="27.5" fill="#f2f2f2" stroke="#bdbdbd" stroke-width="1"/><text x="1774.1" y="1176.3" font-size="19.4" fill="#111" text-anchor="start" font-weight="normal" textLength="63.1" lengthAdjust="spacingAndGlyphs" >78.6514</text><text x="1863.1" y="1176.3" font-size="19.4" fill="#ececec" text-anchor="start" font-weight="normal" textLength="72.7" lengthAdjust="spacingAndGlyphs" >116.0663</text><text x="1952.1" y="1176.3" font-size="19.4" fill="#ececec" text-anchor="start" font-weight="normal" textLength="72.7" lengthAdjust="spacingAndGlyphs" >162.2144</text><text x="2041.1" y="1176.3" font-size="19.4" fill="#ececec" text-anchor="start" font-weight="normal" textLength="72.7" lengthAdjust="spacingAndGlyphs" >220.0117</text><text x="2130.1" y="1176.3" font-size="19.4" fill="#ececec" text-anchor="start" font-weight="normal" textLength="72.7" lengthAdjust="spacingAndGlyphs" >288.3189</text><text x="2219.1" y="1176.3" font-size="19.4" fill="#ececec" text-anchor="start" font-weight="normal" textLength="72.7" lengthAdjust="spacingAndGlyphs" >364.3620</text><rect x="1151.6" y="1185.0" width="1152.4" height="31.5" fill="#3e3e3e"/><text x="1163.7" y="1207.8" font-size="19.4" fill="#f4f4f4" text-anchor="start" font-weight="bold" textLength="139.5" lengthAdjust="spacingAndGlyphs" >Gamma Log/Log</text><text x="1320.0" y="1207.8" font-size="19.4" fill="#f0f0f0" text-anchor="start" font-weight="normal" textLength="53.5" lengthAdjust="spacingAndGlyphs" >1.2778</text><text x="1418.1" y="1207.8" font-size="19.4" fill="#f0f0f0" text-anchor="start" font-weight="normal" textLength="53.5" lengthAdjust="spacingAndGlyphs" >2.1334</text><text x="1507.1" y="1207.8" font-size="19.4" fill="#f0f0f0" text-anchor="start" font-weight="normal" textLength="53.5" lengthAdjust="spacingAndGlyphs" >2.1797</text><text x="1596.1" y="1207.8" font-size="19.4" fill="#f0f0f0" text-anchor="start" font-weight="normal" textLength="53.5" lengthAdjust="spacingAndGlyphs" >2.1680</text><text x="1685.1" y="1207.8" font-size="19.4" fill="#f0f0f0" text-anchor="start" font-weight="normal" textLength="53.5" lengthAdjust="spacingAndGlyphs" >2.1761</text><text x="1774.1" y="1207.8" font-size="19.4" fill="#f0f0f0" text-anchor="start" font-weight="normal" textLength="53.5" lengthAdjust="spacingAndGlyphs" >2.1844</text><text x="1863.1" y="1207.8" font-size="19.4" fill="#f0f0f0" text-anchor="start" font-weight="normal" textLength="53.5" lengthAdjust="spacingAndGlyphs" >2.2067</text><text x="1952.1" y="1207.8" font-size="19.4" fill="#f0f0f0" text-anchor="start" font-weight="normal" textLength="53.5" lengthAdjust="spacingAndGlyphs" >2.2309</text><text x="2041.1" y="1207.8" font-size="19.4" fill="#f0f0f0" text-anchor="start" font-weight="normal" textLength="53.5" lengthAdjust="spacingAndGlyphs" >2.2429</text><text x="2130.1" y="1207.8" font-size="19.4" fill="#f0f0f0" text-anchor="start" font-weight="normal" textLength="53.5" lengthAdjust="spacingAndGlyphs" >2.1965</text><text x="2219.1" y="1207.8" font-size="19.4" fill="#f0f0f0" text-anchor="start" font-weight="normal" textLength="53.5" lengthAdjust="spacingAndGlyphs" >2.2749</text><rect x="1151.6" y="1216.5" width="1152.4" height="31.5" fill="#838383"/><text x="1163.7" y="1239.3" font-size="19.4" fill="#f4f4f4" text-anchor="start" font-weight="bold" textLength="32.5" lengthAdjust="spacingAndGlyphs" >CCT</text><text x="1320.0" y="1239.3" font-size="19.4" fill="#ececec" text-anchor="start" font-weight="normal" textLength="91.9" lengthAdjust="spacingAndGlyphs" >13175.0000</text><text x="1418.1" y="1239.3" font-size="19.4" fill="#ececec" text-anchor="start" font-weight="normal" textLength="82.3" lengthAdjust="spacingAndGlyphs" >6577.0000</text><text x="1507.1" y="1239.3" font-size="19.4" fill="#ececec" text-anchor="start" font-weight="normal" textLength="82.3" lengthAdjust="spacingAndGlyphs" >6132.0000</text><text x="1596.1" y="1239.3" font-size="19.4" fill="#ececec" text-anchor="start" font-weight="normal" textLength="82.3" lengthAdjust="spacingAndGlyphs" >6047.0000</text><text x="1685.1" y="1239.3" font-size="19.4" fill="#ececec" text-anchor="start" font-weight="normal" textLength="82.3" lengthAdjust="spacingAndGlyphs" >6019.0000</text><text x="1774.1" y="1239.3" font-size="19.4" fill="#ececec" text-anchor="start" font-weight="normal" textLength="82.3" lengthAdjust="spacingAndGlyphs" >6010.0000</text><text x="1863.1" y="1239.3" font-size="19.4" fill="#ececec" text-anchor="start" font-weight="normal" textLength="82.3" lengthAdjust="spacingAndGlyphs" >6006.0000</text><text x="1952.1" y="1239.3" font-size="19.4" fill="#ececec" text-anchor="start" font-weight="normal" textLength="82.3" lengthAdjust="spacingAndGlyphs" >6013.0000</text><text x="2041.1" y="1239.3" font-size="19.4" fill="#ececec" text-anchor="start" font-weight="normal" textLength="82.3" lengthAdjust="spacingAndGlyphs" >6039.0000</text><text x="2130.1" y="1239.3" font-size="19.4" fill="#ececec" text-anchor="start" font-weight="normal" textLength="82.3" lengthAdjust="spacingAndGlyphs" >6116.0000</text><text x="2219.1" y="1239.3" font-size="19.4" fill="#ececec" text-anchor="start" font-weight="normal" textLength="82.3" lengthAdjust="spacingAndGlyphs" >6511.0000</text><rect x="1151.6" y="1248.0" width="1152.4" height="31.5" fill="#3e3e3e"/><text x="1163.7" y="1270.8" font-size="19.4" fill="#f4f4f4" text-anchor="start" font-weight="bold" textLength="69.0" lengthAdjust="spacingAndGlyphs" >ΔE 2000</text><text x="1320.0" y="1270.8" font-size="19.4" fill="#f0f0f0" text-anchor="start" font-weight="normal" textLength="53.5" lengthAdjust="spacingAndGlyphs" >1.5000</text><text x="1418.1" y="1270.8" font-size="19.4" fill="#f0f0f0" text-anchor="start" font-weight="normal" textLength="53.5" lengthAdjust="spacingAndGlyphs" >1.6888</text><text x="1507.1" y="1270.8" font-size="19.4" fill="#f0f0f0" text-anchor="start" font-weight="normal" textLength="53.5" lengthAdjust="spacingAndGlyphs" >1.3520</text><text x="1596.1" y="1270.8" font-size="19.4" fill="#f0f0f0" text-anchor="start" font-weight="normal" textLength="53.5" lengthAdjust="spacingAndGlyphs" >1.7981</text><text x="1685.1" y="1270.8" font-size="19.4" fill="#f0f0f0" text-anchor="start" font-weight="normal" textLength="53.5" lengthAdjust="spacingAndGlyphs" >2.4264</text><text x="1774.1" y="1270.8" font-size="19.4" fill="#f0f0f0" text-anchor="start" font-weight="normal" textLength="53.5" lengthAdjust="spacingAndGlyphs" >2.9452</text><text x="1863.1" y="1270.8" font-size="19.4" fill="#f0f0f0" text-anchor="start" font-weight="normal" textLength="53.5" lengthAdjust="spacingAndGlyphs" >3.3058</text><text x="1952.1" y="1270.8" font-size="19.4" fill="#f0f0f0" text-anchor="start" font-weight="normal" textLength="53.5" lengthAdjust="spacingAndGlyphs" >3.5853</text><text x="2041.1" y="1270.8" font-size="19.4" fill="#f0f0f0" text-anchor="start" font-weight="normal" textLength="53.5" lengthAdjust="spacingAndGlyphs" >3.6928</text><text x="2130.1" y="1270.8" font-size="19.4" fill="#f0f0f0" text-anchor="start" font-weight="normal" textLength="53.5" lengthAdjust="spacingAndGlyphs" >3.2239</text><text x="2219.1" y="1270.8" font-size="19.4" fill="#f0f0f0" text-anchor="start" font-weight="normal" textLength="53.5" lengthAdjust="spacingAndGlyphs" >2.9421</text><rect x="1151.6" y="1279.5" width="1152.4" height="31.5" fill="#838383"/><text x="1163.7" y="1302.3" font-size="19.4" fill="#f4f4f4" text-anchor="start" font-weight="bold" textLength="55.0" lengthAdjust="spacingAndGlyphs" >ΔE ITP</text><text x="1320.0" y="1302.3" font-size="19.4" fill="#ececec" text-anchor="start" font-weight="normal" textLength="63.1" lengthAdjust="spacingAndGlyphs" >82.0446</text><text x="1418.1" y="1302.3" font-size="19.4" fill="#ececec" text-anchor="start" font-weight="normal" textLength="63.1" lengthAdjust="spacingAndGlyphs" >14.0391</text><text x="1507.1" y="1302.3" font-size="19.4" fill="#ececec" text-anchor="start" font-weight="normal" textLength="53.5" lengthAdjust="spacingAndGlyphs" >6.4976</text><text x="1596.1" y="1302.3" font-size="19.4" fill="#ececec" text-anchor="start" font-weight="normal" textLength="53.5" lengthAdjust="spacingAndGlyphs" >4.0183</text><text x="1685.1" y="1302.3" font-size="19.4" fill="#ececec" text-anchor="start" font-weight="normal" textLength="53.5" lengthAdjust="spacingAndGlyphs" >4.8412</text><text x="1774.1" y="1302.3" font-size="19.4" fill="#ececec" text-anchor="start" font-weight="normal" textLength="53.5" lengthAdjust="spacingAndGlyphs" >5.2205</text><text x="1863.1" y="1302.3" font-size="19.4" fill="#ececec" text-anchor="start" font-weight="normal" textLength="53.5" lengthAdjust="spacingAndGlyphs" >5.1819</text><text x="1952.1" y="1302.3" font-size="19.4" fill="#ececec" text-anchor="start" font-weight="normal" textLength="53.5" lengthAdjust="spacingAndGlyphs" >5.0934</text><text x="2041.1" y="1302.3" font-size="19.4" fill="#ececec" text-anchor="start" font-weight="normal" textLength="53.5" lengthAdjust="spacingAndGlyphs" >4.8520</text><text x="2130.1" y="1302.3" font-size="19.4" fill="#ececec" text-anchor="start" font-weight="normal" textLength="53.5" lengthAdjust="spacingAndGlyphs" >4.0372</text><text x="2219.1" y="1302.3" font-size="19.4" fill="#ececec" text-anchor="start" font-weight="normal" textLength="53.5" lengthAdjust="spacingAndGlyphs" >1.7857</text><rect x="301.7" y="1435" width="157.7" height="90.5" rx="5" fill="url(#patchbtn)"/><rect x="308.7" y="1442.5" width="143.7" height="53.5" rx="5" fill="rgb(0,0,0)" stroke="rgba(0,0,0,0.25)" stroke-width="1"/><text x="380.5" y="1519.8" font-size="17" fill="#2a2a2a" text-anchor="middle" font-weight="bold" >0</text><rect x="462.86" y="1435" width="157.7" height="90.5" rx="5" fill="url(#patchbtn)"/><rect x="469.86" y="1442.5" width="143.7" height="53.5" rx="5" fill="rgb(28,28,28)" stroke="rgba(0,0,0,0.25)" stroke-width="1"/><text x="541.7" y="1519.8" font-size="17" fill="#2a2a2a" text-anchor="middle" font-weight="bold" >10</text><rect x="624.02" y="1435" width="157.7" height="90.5" rx="5" fill="url(#patchbtn)"/><rect x="631.02" y="1442.5" width="143.7" height="53.5" rx="5" fill="rgb(51,51,51)" stroke="rgba(0,0,0,0.25)" stroke-width="1"/><text x="702.9" y="1519.8" font-size="17" fill="#2a2a2a" text-anchor="middle" font-weight="bold" >20</text><rect x="785.1800000000001" y="1435" width="157.7" height="90.5" rx="5" fill="url(#patchbtn)"/><rect x="792.1800000000001" y="1442.5" width="143.7" height="53.5" rx="5" fill="rgb(77,77,77)" stroke="rgba(0,0,0,0.25)" stroke-width="1"/><text x="864.0" y="1519.8" font-size="17" fill="#2a2a2a" text-anchor="middle" font-weight="bold" >30</text><rect x="946.3399999999999" y="1435" width="157.7" height="90.5" rx="5" fill="url(#patchbtn)"/><rect x="953.3399999999999" y="1442.5" width="143.7" height="53.5" rx="5" fill="rgb(102,102,102)" stroke="rgba(0,0,0,0.25)" stroke-width="1"/><text x="1025.2" y="1519.8" font-size="17" fill="#2a2a2a" text-anchor="middle" font-weight="bold" >40</text><rect x="1107.5" y="1435" width="157.7" height="90.5" rx="5" fill="url(#patchbtn)"/><rect x="1114.5" y="1442.5" width="143.7" height="53.5" rx="5" fill="rgb(128,128,128)" stroke="rgba(0,0,0,0.25)" stroke-width="1"/><text x="1186.3" y="1519.8" font-size="17" fill="#2a2a2a" text-anchor="middle" font-weight="bold" >50</text><rect x="1268.66" y="1435" width="157.7" height="90.5" rx="5" fill="url(#patchbtn)"/><rect x="1275.66" y="1442.5" width="143.7" height="53.5" rx="5" fill="rgb(153,153,153)" stroke="rgba(0,0,0,0.25)" stroke-width="1"/><text x="1347.5" y="1519.8" font-size="17" fill="#2a2a2a" text-anchor="middle" font-weight="bold" >60</text><rect x="1429.82" y="1435" width="157.7" height="90.5" rx="5" fill="url(#patchbtn)"/><rect x="1436.82" y="1442.5" width="143.7" height="53.5" rx="5" fill="rgb(179,179,179)" stroke="rgba(0,0,0,0.25)" stroke-width="1"/><text x="1508.7" y="1519.8" font-size="17" fill="#2a2a2a" text-anchor="middle" font-weight="bold" >70</text><rect x="1590.98" y="1435" width="157.7" height="90.5" rx="5" fill="url(#patchbtn)"/><rect x="1597.98" y="1442.5" width="143.7" height="53.5" rx="5" fill="rgb(204,204,204)" stroke="rgba(0,0,0,0.25)" stroke-width="1"/><text x="1669.8" y="1519.8" font-size="17" fill="#2a2a2a" text-anchor="middle" font-weight="bold" >80</text><rect x="1752.14" y="1435" width="157.7" height="90.5" rx="5" fill="url(#patchbtn)"/><rect x="1759.14" y="1442.5" width="143.7" height="53.5" rx="5" fill="rgb(230,230,230)" stroke="rgba(0,0,0,0.25)" stroke-width="1"/><text x="1831.0" y="1519.8" font-size="17" fill="#2a2a2a" text-anchor="middle" font-weight="bold" >90</text><rect x="1913.3" y="1435" width="157.7" height="90.5" rx="5" fill="url(#selbtn)"/><rect x="1920.3" y="1442.5" width="143.7" height="53.5" rx="5" fill="rgb(255,255,255)" stroke="rgba(0,0,0,0.25)" stroke-width="1"/><text x="1992.1" y="1519.8" font-size="17" fill="#ffffff" text-anchor="middle" font-weight="bold" >100</text><rect x="2075.5" y="1435.5" width="71.5" height="90" rx="5" fill="url(#navbtn)"/><rect x="2075.5" y="1461.5" width="71.5" height="1.5" fill="#6a6a6a"/><circle cx="2111.5" cy="1449" r="11.5" fill="url(#ddcirc)" opacity="0.8"/><path d="M2104.5 1452 L2111.5 1445 L2118.5 1452 Z" fill="#333"/><rect x="2090" y="1473" width="44" height="44" rx="7" fill="#8c8c8c" stroke="#262626" stroke-width="3"/><rect x="2091.5" y="1474.5" width="41" height="20.5" rx="5" fill="#a2a2a2"/><rect x="2101.5" y="1485" width="21" height="20" fill="#000"/><rect x="2101.5" y="1485" width="21" height="10" fill="#1c1c1c"/><rect x="2149" y="1435.5" width="411" height="90" rx="4" fill="url(#navbtn)"/><rect x="2218.7" y="1435.5" width="1.3" height="45" fill="#3a3a3a"/><rect x="2286.7" y="1435.5" width="1.3" height="45" fill="#3a3a3a"/><rect x="2353.7" y="1435.5" width="1.3" height="45" fill="#3a3a3a"/><rect x="2421.2" y="1435.5" width="1.3" height="45" fill="#3a3a3a"/><rect x="2488.2" y="1435.5" width="1.3" height="45" fill="#3a3a3a"/><rect x="2149" y="1480" width="411" height="1.5" fill="#3a3a3a"/><rect x="2353.7" y="1481" width="1.3" height="45" fill="#3a3a3a"/><circle cx="2183.5" cy="1456" r="15" fill="url(#ncirc)"/><circle cx="2252.5" cy="1456" r="15" fill="url(#ncirc)"/><circle cx="2320" cy="1456" r="15" fill="url(#ncirc)"/><circle cx="2388.2" cy="1456" r="15" fill="url(#ncirc)"/><circle cx="2455.7" cy="1456" r="15" fill="url(#ncirc)"/><circle cx="2523" cy="1456" r="15" fill="url(#ncirc)"/><circle cx="2195" cy="1504" r="15" fill="url(#ncirc)"/><circle cx="2514.8" cy="1503.6" r="15" fill="url(#ncirc)"/><path d="M2248 1451 L2260 1458 L2248 1465 Z" fill="#222"/><path d="M2314 1451 V1448 H2326 V1451 M2314 1460 V1463 H2326 V1460" fill="none" stroke="#222" stroke-width="1.6"/><path d="M2382 1456 Q2386 1450 2389 1456 Q2392 1462 2396 1456 Q2392 1450 2389 1456 Q2386 1462 2382 1456 Z" fill="none" stroke="#222" stroke-width="1.8"/><path d="M2450 1462 A7 7 0 1 1 2462 1452" fill="none" stroke="#222" stroke-width="2.2"/><path d="M2458 1449 L2463 1453 L2458 1455 Z" fill="#222"/><text x="2236.5" y="1516.0" font-size="34" fill="#242424" text-anchor="start" font-weight="normal" textLength="75.0" lengthAdjust="spacingAndGlyphs" >Back</text><text x="2396.6" y="1516.0" font-size="34" fill="#242424" text-anchor="start" font-weight="normal" textLength="76.0" lengthAdjust="spacingAndGlyphs" >Next</text><path d="M2509 1497 L2515 1503.6 L2509 1510 M2516 1497 L2522 1503.6 L2516 1510" fill="none" stroke="#333" stroke-width="2.4"/><path d="M2201 1498 L2195 1504 L2201 1510 M2194 1498 L2188 1504 L2194 1510" fill="none" stroke="#333" stroke-width="2.4"/><rect x="2555" y="1435" width="5" height="93" fill="#222"/><g opacity="0.82" filter="url(#wsh)"><path d="M2174 1446 L2226 1457 L2228 1486 L2187.5 1490 M2174 1446 L2176 1494 L2208 1510 L2262 1493 L2232 1488" fill="none" stroke="#f2f2f2" stroke-width="7.5" stroke-linejoin="round" stroke-linecap="round"/><path d="M2174 1446 L2226 1457 L2228 1486 L2187.5 1490 M2174 1446 L2176 1494 L2208 1510 L2262 1493 L2232 1488" fill="none" stroke="#a3343b" stroke-width="4.5" stroke-linejoin="round" stroke-linecap="round"/><path d="M2187.5 1464.5 Q2190 1460 2194 1462.5 Q2200 1467 2205 1475 Q2216 1458 2232.5 1444.5 Q2220 1460 2207 1483.5 Q2205 1485.5 2203 1483.5 Q2196 1472 2187.5 1464.5 Z" fill="#4a4a4a" stroke="#f2f2f2" stroke-width="1.6" stroke-linejoin="round"/><rect x="2181" y="1453" width="6" height="7" fill="#222"/><text x="2233.5" y="1484.0" font-size="35.8" fill="#a3343b" text-anchor="start" font-weight="bold" textLength="198.0" lengthAdjust="spacingAndGlyphs" stroke="#f2f2f2" stroke-width="2.6" paint-order="stroke" stroke-linejoin="round">NOTEBOOK</text><text x="2431.0" y="1484.5" font-size="35.8" fill="#4a4a4a" text-anchor="start" font-weight="normal" textLength="119.0" lengthAdjust="spacingAndGlyphs" stroke="#f2f2f2" stroke-width="2.2" paint-order="stroke" stroke-linejoin="round">CHECK</text></g></svg>
</body></html>
